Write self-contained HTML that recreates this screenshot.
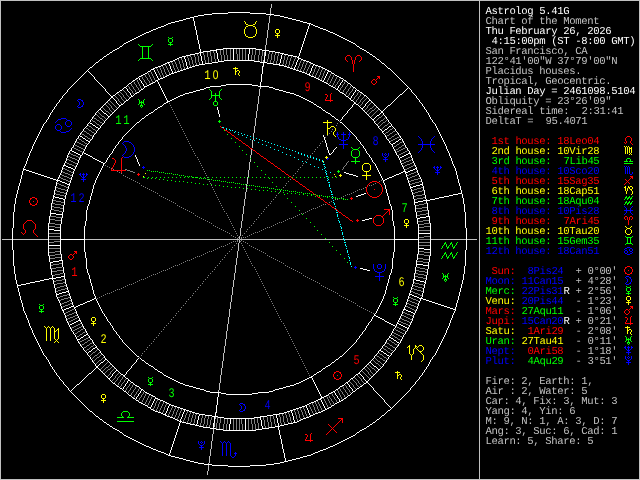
<!DOCTYPE html>
<html lang="en"><head><meta charset="utf-8"><title>Astrolog 5.41G</title>
<style>html,body{margin:0;padding:0;background:#000;overflow:hidden}svg{display:block;will-change:transform}</style></head>
<body>
<svg width="640" height="480" viewBox="0 0 640 480" shape-rendering="crispEdges">
<rect width="640" height="480" fill="#000"/>
<path fill="#ffffff" d="M228 12h22v1h-22zM212 13h16v1h-16zM250 13h16v1h-16zM204 14h8v1h-8zM266 14h8v1h-8zM198 15h6v1h-6zM274 15h6v1h-6zM194 16h4v1h-4zM280 16h4v1h-4zM190 17h4v1h-4zM284 17h4v1h-4zM186 18h4v1h-4zM193 18h1v3h-1zM288 18h4v1h-4zM183 19h3v1h-3zM292 19h4v1h-4zM179 20h4v1h-4zM296 20h4v1h-4zM175 21h4v1h-4zM194 21h1v5h-1zM300 21h3v1h-3zM171 22h4v1h-4zM303 22h4v1h-4zM168 23h3v1h-3zM307 23h4v1h-4zM166 24h2v1h-2zM309 24h1v2h-1zM311 24h2v1h-2zM164 25h2v1h-2zM313 25h2v1h-2zM161 26h3v1h-3zM195 26h1v4h-1zM308 26h1v3h-1zM315 26h3v1h-3zM158 27h3v1h-3zM318 27h2v1h-2zM156 28h2v1h-2zM320 28h3v1h-3zM153 29h3v1h-3zM307 29h1v3h-1zM323 29h3v1h-3zM151 30h2v1h-2zM196 30h1v5h-1zM326 30h2v1h-2zM149 31h2v1h-2zM328 31h2v1h-2zM146 32h3v1h-3zM306 32h1v3h-1zM330 32h3v1h-3zM144 33h2v1h-2zM333 33h2v1h-2zM142 34h2v1h-2zM335 34h2v1h-2zM140 35h2v1h-2zM197 35h1v5h-1zM305 35h1v3h-1zM337 35h2v1h-2zM138 36h2v1h-2zM339 36h2v1h-2zM136 37h2v1h-2zM341 37h2v1h-2zM134 38h2v1h-2zM304 38h1v3h-1zM343 38h2v1h-2zM132 39h2v1h-2zM345 39h2v1h-2zM130 40h2v1h-2zM198 40h1v4h-1zM347 40h2v1h-2zM128 41h2v1h-2zM303 41h1v3h-1zM349 41h2v1h-2zM126 42h2v1h-2zM351 42h2v1h-2zM124 43h2v1h-2zM353 43h2v1h-2zM123 44h1v1h-1zM199 44h1v5h-1zM302 44h1v3h-1zM355 44h1v1h-1zM122 45h1v1h-1zM356 45h1v1h-1zM120 46h2v1h-2zM357 46h2v1h-2zM119 47h1v1h-1zM301 47h1v3h-1zM359 47h1v1h-1zM117 48h2v1h-2zM223 48h33v1h-33zM360 48h2v1h-2zM115 49h2v1h-2zM200 49h1v3h-1zM216 49h7v1h-7zM233 49h1v11h-1zM249 49h1v5h-1zM256 49h6v1h-6zM362 49h2v1h-2zM113 50h2v1h-2zM210 50h7v1h-7zM262 50h7v1h-7zM300 50h1v3h-1zM364 50h2v1h-2zM112 51h1v1h-1zM203 51h7v1h-7zM216 51h1v2h-1zM265 51h1v5h-1zM269 51h6v1h-6zM366 51h1v1h-1zM110 52h2v1h-2zM199 52h4v1h-4zM275 52h5v1h-5zM367 52h2v1h-2zM109 53h1v1h-1zM195 53h4v1h-4zM200 53h1v3h-1zM217 53h1v6h-1zM280 53h4v1h-4zM299 53h1v3h-1zM369 53h1v1h-1zM107 54h2v1h-2zM190 54h5v1h-5zM248 54h1v6h-1zM282 54h1v1h-1zM284 54h4v1h-4zM370 54h2v1h-2zM106 55h1v1h-1zM186 55h4v1h-4zM281 55h1v4h-1zM288 55h5v1h-5zM372 55h1v1h-1zM104 56h2v1h-2zM182 56h4v1h-4zM201 56h1v5h-1zM264 56h1v6h-1zM293 56h4v1h-4zM298 56h1v1h-1zM373 56h2v1h-2zM103 57h1v1h-1zM179 57h3v1h-3zM184 57h1v2h-1zM297 57h2v1h-2zM375 57h1v1h-1zM102 58h1v1h-1zM177 58h2v1h-2zM298 58h3v1h-3zM376 58h1v1h-1zM100 59h2v1h-2zM175 59h2v1h-2zM185 59h1v3h-1zM218 59h1v2h-1zM280 59h1v4h-1zM298 59h1v1h-1zM301 59h2v1h-2zM377 59h2v1h-2zM99 60h1v1h-1zM173 60h2v1h-2zM224 60h30v1h-30zM297 60h1v2h-1zM303 60h3v1h-3zM379 60h1v1h-1zM98 61h1v1h-1zM170 61h3v1h-3zM202 61h1v3h-1zM218 61h6v1h-6zM254 61h6v1h-6zM306 61h3v1h-3zM380 61h1v1h-1zM96 62h2v1h-2zM167 62h3v1h-3zM186 62h1v4h-1zM212 62h6v1h-6zM260 62h7v1h-7zM296 62h1v3h-1zM309 62h2v1h-2zM381 62h1v1h-1zM95 63h1v1h-1zM165 63h2v1h-2zM168 63h1v1h-1zM205 63h7v1h-7zM263 63h1v3h-1zM267 63h6v1h-6zM279 63h1v1h-1zM311 63h2v1h-2zM382 63h2v1h-2zM94 64h1v1h-1zM163 64h2v1h-2zM169 64h1v2h-1zM199 64h6v1h-6zM273 64h7v1h-7zM313 64h2v1h-2zM384 64h1v1h-1zM93 65h1v1h-1zM161 65h2v1h-2zM195 65h4v1h-4zM279 65h5v1h-5zM295 65h1v2h-1zM313 65h1v1h-1zM315 65h3v1h-3zM385 65h1v1h-1zM92 66h1v1h-1zM158 66h3v1h-3zM170 66h1v3h-1zM187 66h1v2h-1zM192 66h3v1h-3zM262 66h1v8h-1zM284 66h3v1h-3zM312 66h1v2h-1zM318 66h3v1h-3zM386 66h1v1h-1zM90 67h2v1h-2zM155 67h3v1h-3zM189 67h3v1h-3zM287 67h3v1h-3zM294 67h1v2h-1zM321 67h2v1h-2zM387 67h1v1h-1zM89 68h1v1h-1zM153 68h2v1h-2zM186 68h3v1h-3zM290 68h3v1h-3zM311 68h1v3h-1zM323 68h2v1h-2zM388 68h2v1h-2zM88 69h1v1h-1zM151 69h3v1h-3zM171 69h1v2h-1zM183 69h3v1h-3zM293 69h3v1h-3zM325 69h2v1h-2zM390 69h1v1h-1zM87 70h1v1h-1zM150 70h1v1h-1zM154 70h1v2h-1zM180 70h3v1h-3zM296 70h3v1h-3zM327 70h2v1h-2zM391 70h1v1h-1zM86 71h1v1h-1zM88 71h1v1h-1zM148 71h2v1h-2zM172 71h1v2h-1zM177 71h3v1h-3zM299 71h3v1h-3zM310 71h1v2h-1zM328 71h3v1h-3zM392 71h1v1h-1zM85 72h1v1h-1zM89 72h1v1h-1zM147 72h1v1h-1zM155 72h1v2h-1zM174 72h3v1h-3zM302 72h3v1h-3zM327 72h1v2h-1zM331 72h1v1h-1zM393 72h1v1h-1zM84 73h1v1h-1zM90 73h1v1h-1zM145 73h2v1h-2zM171 73h3v1h-3zM305 73h2v1h-2zM309 73h1v1h-1zM332 73h2v1h-2zM394 73h1v1h-1zM83 74h1v1h-1zM91 74h1v1h-1zM143 74h2v1h-2zM156 74h1v2h-1zM169 74h2v1h-2zM261 74h1v8h-1zM307 74h3v1h-3zM326 74h1v2h-1zM334 74h1v1h-1zM395 74h1v1h-1zM82 75h1v1h-1zM92 75h1v1h-1zM141 75h2v1h-2zM167 75h2v1h-2zM309 75h2v1h-2zM335 75h2v1h-2zM396 75h1v1h-1zM81 76h1v1h-1zM93 76h1v1h-1zM139 76h2v1h-2zM157 76h1v2h-1zM165 76h2v1h-2zM311 76h3v1h-3zM325 76h1v2h-1zM337 76h2v1h-2zM397 76h1v1h-1zM80 77h1v1h-1zM94 77h1v2h-1zM138 77h1v1h-1zM163 77h2v1h-2zM314 77h2v1h-2zM339 77h2v1h-2zM398 77h1v1h-1zM79 78h1v1h-1zM136 78h2v1h-2zM139 78h1v2h-1zM158 78h1v1h-1zM160 78h3v1h-3zM316 78h2v1h-2zM324 78h1v2h-1zM341 78h2v1h-2zM399 78h1v1h-1zM78 79h1v1h-1zM95 79h1v1h-1zM135 79h1v1h-1zM158 79h2v1h-2zM318 79h2v1h-2zM343 79h1v1h-1zM400 79h1v1h-1zM77 80h1v1h-1zM96 80h1v1h-1zM133 80h2v1h-2zM140 80h1v1h-1zM156 80h2v1h-2zM320 80h2v1h-2zM323 80h1v1h-1zM342 80h1v2h-1zM344 80h2v1h-2zM401 80h1v1h-1zM76 81h1v1h-1zM97 81h1v1h-1zM132 81h1v1h-1zM141 81h1v2h-1zM155 81h1v1h-1zM157 81h1v1h-1zM322 81h2v1h-2zM346 81h1v1h-1zM402 81h1v1h-1zM75 82h1v1h-1zM98 82h1v1h-1zM131 82h1v1h-1zM153 82h2v1h-2zM158 82h1v2h-1zM260 82h1v4h-1zM324 82h2v1h-2zM341 82h1v1h-1zM347 82h1v1h-1zM403 82h1v1h-1zM74 83h1v1h-1zM99 83h1v1h-1zM129 83h2v1h-2zM142 83h1v1h-1zM151 83h2v1h-2zM326 83h2v1h-2zM340 83h1v2h-1zM348 83h2v1h-2zM404 83h1v1h-1zM73 84h1v1h-1zM100 84h1v1h-1zM128 84h1v1h-1zM143 84h1v2h-1zM149 84h2v1h-2zM159 84h1v2h-1zM226 84h26v1h-26zM328 84h1v1h-1zM350 84h1v1h-1zM405 84h1v1h-1zM72 85h1v1h-1zM101 85h1v1h-1zM127 85h1v1h-1zM147 85h2v1h-2zM221 85h5v1h-5zM252 85h6v1h-6zM329 85h2v1h-2zM339 85h1v1h-1zM351 85h1v1h-1zM406 85h1v1h-1zM71 86h1v1h-1zM102 86h1v1h-1zM126 86h1v1h-1zM144 86h3v1h-3zM160 86h1v2h-1zM210 86h11v1h-11zM258 86h11v1h-11zM331 86h2v1h-2zM338 86h1v2h-1zM352 86h1v1h-1zM407 86h1v1h-1zM70 87h1v1h-1zM103 87h1v1h-1zM124 87h2v1h-2zM144 87h1v1h-1zM206 87h4v1h-4zM269 87h4v1h-4zM333 87h2v1h-2zM353 87h2v1h-2zM408 87h1v1h-1zM69 88h1v1h-1zM104 88h1v1h-1zM123 88h1v1h-1zM126 88h1v1h-1zM143 88h1v1h-1zM161 88h1v2h-1zM204 88h2v1h-2zM273 88h2v1h-2zM335 88h1v1h-1zM337 88h1v1h-1zM355 88h1v1h-1zM407 88h1v1h-1zM409 88h1v1h-1zM68 89h1v1h-1zM105 89h1v2h-1zM122 89h1v1h-1zM127 89h1v2h-1zM141 89h2v1h-2zM200 89h4v1h-4zM275 89h4v1h-4zM336 89h2v1h-2zM356 89h1v1h-1zM406 89h1v1h-1zM410 89h1v1h-1zM67 90h1v2h-1zM120 90h2v1h-2zM140 90h1v1h-1zM162 90h1v2h-1zM196 90h4v1h-4zM279 90h4v1h-4zM338 90h1v1h-1zM355 90h1v2h-1zM357 90h2v1h-2zM405 90h1v1h-1zM411 90h1v2h-1zM106 91h1v1h-1zM119 91h1v1h-1zM128 91h1v1h-1zM139 91h1v1h-1zM193 91h3v1h-3zM283 91h3v1h-3zM339 91h1v1h-1zM359 91h1v1h-1zM404 91h1v1h-1zM66 92h1v1h-1zM107 92h1v1h-1zM117 92h2v1h-2zM129 92h1v1h-1zM137 92h2v1h-2zM163 92h1v2h-1zM189 92h4v1h-4zM286 92h4v1h-4zM340 92h2v1h-2zM354 92h1v1h-1zM360 92h2v1h-2zM403 92h1v1h-1zM412 92h1v1h-1zM65 93h1v1h-1zM108 93h1v1h-1zM116 93h1v1h-1zM130 93h1v2h-1zM135 93h2v1h-2zM185 93h4v1h-4zM290 93h4v1h-4zM342 93h2v1h-2zM353 93h1v2h-1zM362 93h1v1h-1zM402 93h1v1h-1zM413 93h1v1h-1zM64 94h1v1h-1zM109 94h1v1h-1zM115 94h1v1h-1zM134 94h1v1h-1zM164 94h1v2h-1zM183 94h2v1h-2zM294 94h2v1h-2zM344 94h1v1h-1zM363 94h1v1h-1zM400 94h2v1h-2zM414 94h1v1h-1zM63 95h1v1h-1zM110 95h1v1h-1zM113 95h2v1h-2zM131 95h1v1h-1zM133 95h1v1h-1zM180 95h3v1h-3zM296 95h3v1h-3zM345 95h1v1h-1zM352 95h1v1h-1zM364 95h2v1h-2zM399 95h1v1h-1zM415 95h1v1h-1zM62 96h1v2h-1zM111 96h2v2h-2zM131 96h2v1h-2zM165 96h1v2h-1zM178 96h2v1h-2zM299 96h2v1h-2zM346 96h2v1h-2zM351 96h1v2h-1zM366 96h1v1h-1zM398 96h1v1h-1zM416 96h1v2h-1zM130 97h1v1h-1zM176 97h2v1h-2zM301 97h2v1h-2zM348 97h1v1h-1zM367 97h1v1h-1zM397 97h1v1h-1zM61 98h1v1h-1zM110 98h1v1h-1zM113 98h1v1h-1zM129 98h1v1h-1zM166 98h1v2h-1zM174 98h2v1h-2zM303 98h2v1h-2zM349 98h2v1h-2zM368 98h1v1h-1zM396 98h1v1h-1zM417 98h1v1h-1zM60 99h1v1h-1zM109 99h1v1h-1zM114 99h1v1h-1zM128 99h1v1h-1zM172 99h2v1h-2zM305 99h2v1h-2zM350 99h1v1h-1zM369 99h1v1h-1zM395 99h1v1h-1zM418 99h1v1h-1zM59 100h1v2h-1zM108 100h1v1h-1zM115 100h1v1h-1zM126 100h2v1h-2zM167 100h1v1h-1zM170 100h2v1h-2zM307 100h2v1h-2zM351 100h2v1h-2zM369 100h2v1h-2zM394 100h1v1h-1zM419 100h1v2h-1zM107 101h1v1h-1zM116 101h1v2h-1zM125 101h1v1h-1zM167 101h3v1h-3zM309 101h2v1h-2zM353 101h1v1h-1zM368 101h1v1h-1zM371 101h1v1h-1zM393 101h1v1h-1zM58 102h1v1h-1zM106 102h1v1h-1zM124 102h1v1h-1zM166 102h2v1h-2zM311 102h2v1h-2zM354 102h1v1h-1zM367 102h1v1h-1zM372 102h1v1h-1zM392 102h1v1h-1zM420 102h1v1h-1zM57 103h1v1h-1zM105 103h1v1h-1zM117 103h1v1h-1zM123 103h1v1h-1zM164 103h2v1h-2zM313 103h1v1h-1zM354 103h2v1h-2zM366 103h1v1h-1zM373 103h1v1h-1zM391 103h1v1h-1zM421 103h1v1h-1zM56 104h1v2h-1zM104 104h1v1h-1zM118 104h1v1h-1zM121 104h2v1h-2zM163 104h1v1h-1zM314 104h2v1h-2zM353 104h1v1h-1zM356 104h2v1h-2zM365 104h1v2h-1zM374 104h1v1h-1zM390 104h1v1h-1zM422 104h1v2h-1zM103 105h1v1h-1zM119 105h2v1h-2zM162 105h1v1h-1zM316 105h1v1h-1zM352 105h1v2h-1zM358 105h1v1h-1zM375 105h1v1h-1zM388 105h2v1h-2zM55 106h1v1h-1zM102 106h1v1h-1zM119 106h1v1h-1zM160 106h2v1h-2zM317 106h2v1h-2zM359 106h1v1h-1zM364 106h1v1h-1zM376 106h1v1h-1zM387 106h1v1h-1zM423 106h1v1h-1zM54 107h1v2h-1zM101 107h1v1h-1zM118 107h1v1h-1zM158 107h2v1h-2zM217 107h1v3h-1zM319 107h2v1h-2zM351 107h1v1h-1zM360 107h1v1h-1zM363 107h1v1h-1zM377 107h1v1h-1zM386 107h1v1h-1zM424 107h1v2h-1zM100 108h1v1h-1zM117 108h1v1h-1zM157 108h1v1h-1zM321 108h1v1h-1zM350 108h1v1h-1zM361 108h2v1h-2zM378 108h1v1h-1zM385 108h1v1h-1zM53 109h1v1h-1zM99 109h2v1h-2zM116 109h1v1h-1zM155 109h2v1h-2zM322 109h1v1h-1zM349 109h1v1h-1zM362 109h1v1h-1zM379 109h1v1h-1zM384 109h1v1h-1zM425 109h1v1h-1zM52 110h1v2h-1zM98 110h1v1h-1zM101 110h1v1h-1zM115 110h1v1h-1zM154 110h1v1h-1zM218 110h1v4h-1zM323 110h2v1h-2zM348 110h1v1h-1zM363 110h1v1h-1zM380 110h1v1h-1zM383 110h1v1h-1zM426 110h1v2h-1zM97 111h1v1h-1zM102 111h1v1h-1zM114 111h1v1h-1zM153 111h1v1h-1zM325 111h1v1h-1zM347 111h1v2h-1zM364 111h1v1h-1zM381 111h2v2h-2zM51 112h1v1h-1zM96 112h1v1h-1zM103 112h1v1h-1zM113 112h1v1h-1zM151 112h2v1h-2zM326 112h2v1h-2zM365 112h1v1h-1zM427 112h1v1h-1zM50 113h1v2h-1zM95 113h1v2h-1zM104 113h2v1h-2zM112 113h1v1h-1zM149 113h2v1h-2zM328 113h2v1h-2zM346 113h1v1h-1zM366 113h1v1h-1zM380 113h1v1h-1zM383 113h1v2h-1zM428 113h1v2h-1zM106 114h1v1h-1zM111 114h1v1h-1zM148 114h1v1h-1zM219 114h1v3h-1zM330 114h1v1h-1zM345 114h1v1h-1zM367 114h1v1h-1zM379 114h1v1h-1zM49 115h1v2h-1zM94 115h1v1h-1zM107 115h1v1h-1zM110 115h1v1h-1zM146 115h2v1h-2zM331 115h1v1h-1zM344 115h1v1h-1zM368 115h1v1h-1zM377 115h2v1h-2zM384 115h1v1h-1zM429 115h1v2h-1zM93 116h1v1h-1zM108 116h2v1h-2zM145 116h1v1h-1zM332 116h2v1h-2zM343 116h1v1h-1zM369 116h1v1h-1zM376 116h1v1h-1zM385 116h1v1h-1zM48 117h1v2h-1zM92 117h1v2h-1zM108 117h1v1h-1zM144 117h1v1h-1zM334 117h1v1h-1zM342 117h1v2h-1zM370 117h1v1h-1zM375 117h1v1h-1zM386 117h1v2h-1zM430 117h1v2h-1zM107 118h1v1h-1zM142 118h2v1h-2zM335 118h1v1h-1zM371 118h1v1h-1zM374 118h1v1h-1zM47 119h1v1h-1zM91 119h1v1h-1zM106 119h1v1h-1zM141 119h1v1h-1zM336 119h2v1h-2zM341 119h1v1h-1zM372 119h2v1h-2zM387 119h1v1h-1zM431 119h1v1h-1zM46 120h1v2h-1zM90 120h1v2h-1zM105 120h1v1h-1zM140 120h1v1h-1zM338 120h1v1h-1zM340 120h1v1h-1zM373 120h1v1h-1zM388 120h1v2h-1zM432 120h1v2h-1zM104 121h1v2h-1zM139 121h1v1h-1zM374 121h1v2h-1zM45 122h1v1h-1zM89 122h1v1h-1zM137 122h2v1h-2zM340 122h2v1h-2zM389 122h1v1h-1zM433 122h1v1h-1zM44 123h1v1h-1zM88 123h1v1h-1zM90 123h2v1h-2zM103 123h1v1h-1zM136 123h1v1h-1zM342 123h1v1h-1zM375 123h1v1h-1zM390 123h1v1h-1zM434 123h1v1h-1zM43 124h1v2h-1zM87 124h1v2h-1zM92 124h1v1h-1zM102 124h1v1h-1zM135 124h1v1h-1zM343 124h1v1h-1zM376 124h1v1h-1zM391 124h1v2h-1zM435 124h1v2h-1zM93 125h2v1h-2zM101 125h1v1h-1zM134 125h1v1h-1zM344 125h1v1h-1zM377 125h1v1h-1zM42 126h1v2h-1zM86 126h1v1h-1zM95 126h1v1h-1zM100 126h1v2h-1zM133 126h1v1h-1zM345 126h1v1h-1zM378 126h1v2h-1zM389 126h2v1h-2zM392 126h1v1h-1zM436 126h1v2h-1zM85 127h1v1h-1zM96 127h2v1h-2zM132 127h1v1h-1zM346 127h1v1h-1zM388 127h1v1h-1zM393 127h1v1h-1zM41 128h1v2h-1zM84 128h1v1h-1zM98 128h2v1h-2zM131 128h1v1h-1zM347 128h1v1h-1zM379 128h1v1h-1zM387 128h1v1h-1zM394 128h1v1h-1zM437 128h1v2h-1zM83 129h1v2h-1zM98 129h1v1h-1zM130 129h1v1h-1zM348 129h1v1h-1zM380 129h1v1h-1zM385 129h2v1h-2zM395 129h1v2h-1zM40 130h1v2h-1zM97 130h1v1h-1zM129 130h1v1h-1zM349 130h1v1h-1zM381 130h1v1h-1zM384 130h1v1h-1zM438 130h1v2h-1zM82 131h1v1h-1zM96 131h1v2h-1zM128 131h1v1h-1zM350 131h1v1h-1zM382 131h2v1h-2zM396 131h1v1h-1zM39 132h1v2h-1zM81 132h1v1h-1zM127 132h1v1h-1zM351 132h1v1h-1zM382 132h1v1h-1zM397 132h1v1h-1zM439 132h1v2h-1zM80 133h1v2h-1zM95 133h1v1h-1zM126 133h1v1h-1zM352 133h1v1h-1zM383 133h1v1h-1zM398 133h1v2h-1zM38 134h1v2h-1zM94 134h1v1h-1zM125 134h1v1h-1zM353 134h1v1h-1zM384 134h1v1h-1zM440 134h1v2h-1zM79 135h1v1h-1zM93 135h1v2h-1zM124 135h1v1h-1zM323 135h1v2h-1zM354 135h1v1h-1zM385 135h1v2h-1zM399 135h1v1h-1zM37 136h1v2h-1zM78 136h1v2h-1zM80 136h2v1h-2zM123 136h1v1h-1zM355 136h1v1h-1zM400 136h1v2h-1zM441 136h1v2h-1zM82 137h1v1h-1zM92 137h1v2h-1zM122 137h1v2h-1zM324 137h1v3h-1zM356 137h1v2h-1zM386 137h1v2h-1zM36 138h1v2h-1zM77 138h1v1h-1zM83 138h2v1h-2zM401 138h1v1h-1zM442 138h1v2h-1zM76 139h1v2h-1zM85 139h1v1h-1zM91 139h1v1h-1zM121 139h1v1h-1zM357 139h1v1h-1zM387 139h1v1h-1zM399 139h2v1h-2zM402 139h1v2h-1zM35 140h1v2h-1zM86 140h2v1h-2zM90 140h1v1h-1zM120 140h1v1h-1zM325 140h1v3h-1zM358 140h1v1h-1zM388 140h1v1h-1zM398 140h1v1h-1zM443 140h1v2h-1zM75 141h1v2h-1zM88 141h2v1h-2zM119 141h1v1h-1zM359 141h1v1h-1zM389 141h1v2h-1zM396 141h2v1h-2zM403 141h1v2h-1zM34 142h1v2h-1zM89 142h1v1h-1zM118 142h1v2h-1zM360 142h1v2h-1zM395 142h1v1h-1zM444 142h1v2h-1zM74 143h1v2h-1zM88 143h1v1h-1zM326 143h1v4h-1zM390 143h1v1h-1zM393 143h2v1h-2zM404 143h1v2h-1zM33 144h1v2h-1zM87 144h1v1h-1zM117 144h1v1h-1zM361 144h1v1h-1zM391 144h2v1h-2zM445 144h1v2h-1zM73 145h1v2h-1zM86 145h1v2h-1zM116 145h1v1h-1zM362 145h1v1h-1zM392 145h1v2h-1zM405 145h1v2h-1zM32 146h1v3h-1zM115 146h1v2h-1zM363 146h1v2h-1zM446 146h1v3h-1zM72 147h1v1h-1zM85 147h1v2h-1zM327 147h1v3h-1zM336 147h1v1h-1zM393 147h1v2h-1zM406 147h1v1h-1zM71 148h1v2h-1zM114 148h1v1h-1zM335 148h1v1h-1zM364 148h1v1h-1zM407 148h1v2h-1zM31 149h1v2h-1zM84 149h1v2h-1zM113 149h1v2h-1zM334 149h1v1h-1zM365 149h1v2h-1zM394 149h1v2h-1zM447 149h1v2h-1zM70 150h2v1h-2zM328 150h1v3h-1zM333 150h1v2h-1zM408 150h1v1h-1zM30 151h1v2h-1zM69 151h1v2h-1zM72 151h2v1h-2zM83 151h1v2h-1zM112 151h1v2h-1zM366 151h1v2h-1zM395 151h1v2h-1zM409 151h1v2h-1zM448 151h1v2h-1zM74 152h2v1h-2zM332 152h1v1h-1zM29 153h1v3h-1zM68 153h1v2h-1zM76 153h2v1h-2zM82 153h1v2h-1zM84 153h2v1h-2zM111 153h1v1h-1zM329 153h1v1h-1zM331 153h1v1h-1zM367 153h1v1h-1zM396 153h1v2h-1zM408 153h3v1h-3zM449 153h1v3h-1zM78 154h2v1h-2zM86 154h2v1h-2zM110 154h1v1h-1zM329 154h2v1h-2zM368 154h1v1h-1zM406 154h2v1h-2zM410 154h1v1h-1zM67 155h1v3h-1zM80 155h2v1h-2zM88 155h2v1h-2zM109 155h1v2h-1zM135 155h1v2h-1zM369 155h1v2h-1zM397 155h1v1h-1zM404 155h2v1h-2zM411 155h1v3h-1zM28 156h1v2h-1zM80 156h1v2h-1zM90 156h2v1h-2zM398 156h1v2h-1zM402 156h2v1h-2zM450 156h1v2h-1zM92 157h1v1h-1zM108 157h1v1h-1zM136 157h1v2h-1zM370 157h1v1h-1zM400 157h2v1h-2zM27 158h1v3h-1zM66 158h1v3h-1zM79 158h1v2h-1zM93 158h2v1h-2zM107 158h1v2h-1zM371 158h1v2h-1zM399 158h1v2h-1zM412 158h1v3h-1zM451 158h1v3h-1zM95 159h2v1h-2zM137 159h1v3h-1zM78 160h1v3h-1zM97 160h2v1h-2zM106 160h1v2h-1zM372 160h1v2h-1zM400 160h1v3h-1zM26 161h1v3h-1zM65 161h1v2h-1zM99 161h2v1h-2zM413 161h1v2h-1zM452 161h1v3h-1zM101 162h2v1h-2zM105 162h1v1h-1zM138 162h1v2h-1zM373 162h1v1h-1zM64 163h1v2h-1zM77 163h1v2h-1zM103 163h2v1h-2zM374 163h1v1h-1zM401 163h1v2h-1zM414 163h1v2h-1zM25 164h1v2h-1zM103 164h1v2h-1zM139 164h1v2h-1zM375 164h1v2h-1zM453 164h1v2h-1zM63 165h3v1h-3zM76 165h1v2h-1zM402 165h1v2h-1zM415 165h1v2h-1zM24 166h1v2h-1zM63 166h1v1h-1zM66 166h2v1h-2zM102 166h1v2h-1zM376 166h1v2h-1zM454 166h1v2h-1zM62 167h1v3h-1zM68 167h3v1h-3zM75 167h1v2h-1zM403 167h1v2h-1zM416 167h1v1h-1zM23 168h1v1h-1zM71 168h2v1h-2zM101 168h1v2h-1zM377 168h1v2h-1zM415 168h2v1h-2zM455 168h1v3h-1zM23 169h3v1h-3zM73 169h2v1h-2zM404 169h1v2h-1zM413 169h2v1h-2zM416 169h1v1h-1zM23 170h1v1h-1zM26 170h3v1h-3zM61 170h1v3h-1zM74 170h1v1h-1zM100 170h1v2h-1zM378 170h1v2h-1zM410 170h3v1h-3zM417 170h1v3h-1zM22 171h1v4h-1zM29 171h3v1h-3zM73 171h1v3h-1zM403 171h3v1h-3zM408 171h2v1h-2zM456 171h1v4h-1zM32 172h3v1h-3zM99 172h1v2h-1zM344 172h2v1h-2zM379 172h1v2h-1zM401 172h2v1h-2zM405 172h3v1h-3zM35 173h3v1h-3zM60 173h1v2h-1zM346 173h3v1h-3zM399 173h2v1h-2zM405 173h1v1h-1zM418 173h1v2h-1zM38 174h3v1h-3zM72 174h1v3h-1zM98 174h1v2h-1zM349 174h4v1h-4zM380 174h1v2h-1zM396 174h3v1h-3zM406 174h1v3h-1zM21 175h1v4h-1zM41 175h3v1h-3zM59 175h1v2h-1zM353 175h3v1h-3zM394 175h2v1h-2zM419 175h1v2h-1zM457 175h1v4h-1zM44 176h3v1h-3zM97 176h1v2h-1zM356 176h2v1h-2zM381 176h1v2h-1zM392 176h2v1h-2zM47 177h3v1h-3zM58 177h1v2h-1zM71 177h1v3h-1zM389 177h3v1h-3zM407 177h1v3h-1zM420 177h1v2h-1zM50 178h3v1h-3zM96 178h1v2h-1zM382 178h1v2h-1zM387 178h2v1h-2zM20 179h1v4h-1zM53 179h3v1h-3zM57 179h1v1h-1zM385 179h2v1h-2zM421 179h1v3h-1zM458 179h1v4h-1zM56 180h4v1h-4zM70 180h1v3h-1zM95 180h1v3h-1zM383 180h2v1h-2zM408 180h1v3h-1zM57 181h1v1h-1zM60 181h2v1h-2zM383 181h1v2h-1zM56 182h1v4h-1zM62 182h3v1h-3zM422 182h1v2h-1zM19 183h1v3h-1zM65 183h2v1h-2zM69 183h1v1h-1zM94 183h1v2h-1zM384 183h1v2h-1zM409 183h1v3h-1zM459 183h1v3h-1zM67 184h3v1h-3zM420 184h3v1h-3zM69 185h1v1h-1zM93 185h1v4h-1zM385 185h1v4h-1zM416 185h4v1h-4zM422 185h1v1h-1zM18 186h1v4h-1zM55 186h1v4h-1zM68 186h1v3h-1zM410 186h1v1h-1zM413 186h3v1h-3zM423 186h1v4h-1zM460 186h1v4h-1zM410 187h3v1h-3zM410 188h1v1h-1zM67 189h1v3h-1zM92 189h1v4h-1zM386 189h1v4h-1zM411 189h1v3h-1zM17 190h1v4h-1zM54 190h1v5h-1zM424 190h1v5h-1zM461 190h1v3h-1zM66 192h1v3h-1zM412 192h1v3h-1zM91 193h1v3h-1zM364 193h2v1h-2zM387 193h1v3h-1zM458 193h4v1h-4zM16 194h1v4h-1zM361 194h3v1h-3zM453 194h5v1h-5zM462 194h1v4h-1zM53 195h1v1h-1zM65 195h1v4h-1zM358 195h3v1h-3zM413 195h1v4h-1zM425 195h1v4h-1zM449 195h4v1h-4zM53 196h2v1h-2zM90 196h1v4h-1zM356 196h2v1h-2zM388 196h1v4h-1zM444 196h5v1h-5zM53 197h1v2h-1zM55 197h4v1h-4zM439 197h5v1h-5zM15 198h1v6h-1zM59 198h4v1h-4zM435 198h4v1h-4zM463 198h1v6h-1zM52 199h1v4h-1zM63 199h2v1h-2zM414 199h1v3h-1zM426 199h1v1h-1zM430 199h5v1h-5zM64 200h1v5h-1zM89 200h1v4h-1zM389 200h1v4h-1zM423 200h7v1h-7zM418 201h5v1h-5zM426 201h1v2h-1zM414 202h4v1h-4zM51 203h1v7h-1zM414 203h1v2h-1zM427 203h1v7h-1zM14 204h1v8h-1zM88 204h1v2h-1zM390 204h1v2h-1zM464 204h1v8h-1zM63 205h1v7h-1zM415 205h1v7h-1zM87 206h1v4h-1zM391 206h1v4h-1zM50 210h1v3h-1zM86 210h1v11h-1zM392 210h1v11h-1zM428 210h1v6h-1zM13 212h1v16h-1zM62 212h1v2h-1zM416 212h1v6h-1zM465 212h1v16h-1zM50 213h6v1h-6zM50 214h1v2h-1zM56 214h7v1h-7zM62 215h1v3h-1zM49 216h1v7h-1zM426 216h4v1h-4zM420 217h6v1h-6zM429 217h1v6h-1zM61 218h1v6h-1zM369 218h3v1h-3zM417 218h3v1h-3zM365 219h4v1h-4zM417 219h1v5h-1zM362 220h3v1h-3zM85 221h1v5h-1zM393 221h1v5h-1zM48 223h1v6h-1zM430 223h1v10h-1zM60 224h1v6h-1zM418 224h1v9h-1zM84 226h1v13h-1zM394 226h1v13h-1zM12 228h1v22h-1zM466 228h1v22h-1zM48 229h6v1h-6zM48 230h1v15h-1zM54 230h7v1h-7zM60 231h1v8h-1zM418 233h13v1h-13zM418 234h1v5h-1zM430 234h1v15h-1zM60 239h25v1h-25zM394 239h25v1h-25zM60 240h1v5h-1zM84 240h1v12h-1zM394 240h1v12h-1zM418 240h1v8h-1zM48 245h13v1h-13zM48 246h1v10h-1zM60 246h1v8h-1zM418 248h6v1h-6zM418 249h1v5h-1zM424 249h7v1h-7zM13 250h1v16h-1zM430 250h1v6h-1zM465 250h1v16h-1zM85 252h1v6h-1zM393 252h1v6h-1zM61 254h1v6h-1zM417 254h1v6h-1zM49 256h1v6h-1zM429 256h1v6h-1zM86 258h1v11h-1zM392 258h1v11h-1zM59 260h4v1h-4zM416 260h1v4h-1zM53 261h6v1h-6zM62 261h1v6h-1zM50 262h3v1h-3zM428 262h1v3h-1zM50 263h1v6h-1zM416 264h7v1h-7zM416 265h1v2h-1zM423 265h6v1h-6zM14 266h1v8h-1zM428 266h1v3h-1zM464 266h1v8h-1zM63 267h1v6h-1zM415 267h1v6h-1zM360 268h3v1h-3zM51 269h1v6h-1zM87 269h1v4h-1zM363 269h4v1h-4zM391 269h1v4h-1zM427 269h1v6h-1zM367 270h3v1h-3zM64 273h1v3h-1zM88 273h1v2h-1zM390 273h1v2h-1zM414 273h1v6h-1zM15 274h1v6h-1zM463 274h1v6h-1zM52 275h1v3h-1zM89 275h1v4h-1zM389 275h1v4h-1zM426 275h1v5h-1zM61 276h4v1h-4zM56 277h5v1h-5zM64 277h1v2h-1zM49 278h7v1h-7zM44 279h5v1h-5zM52 279h1v1h-1zM65 279h1v5h-1zM90 279h1v4h-1zM388 279h1v4h-1zM413 279h3v1h-3zM16 280h1v4h-1zM40 280h4v1h-4zM53 280h1v4h-1zM413 280h1v4h-1zM416 280h4v1h-4zM425 280h1v2h-1zM462 280h1v4h-1zM35 281h5v1h-5zM420 281h4v1h-4zM30 282h5v1h-5zM424 282h2v1h-2zM26 283h4v1h-4zM91 283h1v3h-1zM387 283h1v3h-1zM425 283h1v1h-1zM17 284h1v1h-1zM21 284h5v1h-5zM54 284h1v4h-1zM66 284h1v3h-1zM412 284h1v3h-1zM424 284h1v4h-1zM461 284h1v4h-1zM17 285h4v1h-4zM17 286h1v2h-1zM92 286h1v4h-1zM386 286h1v4h-1zM67 287h1v3h-1zM411 287h1v3h-1zM18 288h1v4h-1zM55 288h1v5h-1zM423 288h1v5h-1zM460 288h1v4h-1zM68 290h1v1h-1zM93 290h1v4h-1zM385 290h1v4h-1zM410 290h1v3h-1zM66 291h3v1h-3zM19 292h1v4h-1zM62 292h4v1h-4zM68 292h1v1h-1zM459 292h1v4h-1zM56 293h1v1h-1zM59 293h3v1h-3zM69 293h1v3h-1zM409 293h1v1h-1zM422 293h1v4h-1zM56 294h3v1h-3zM94 294h1v2h-1zM384 294h1v2h-1zM409 294h3v1h-3zM56 295h1v2h-1zM409 295h1v1h-1zM412 295h2v1h-2zM20 296h1v4h-1zM70 296h1v3h-1zM95 296h1v2h-1zM383 296h1v3h-1zM408 296h1v3h-1zM414 296h3v1h-3zM458 296h1v4h-1zM57 297h1v2h-1zM417 297h2v1h-2zM421 297h1v1h-1zM94 298h2v1h-2zM419 298h4v1h-4zM58 299h1v2h-1zM71 299h1v3h-1zM92 299h2v1h-2zM96 299h1v2h-1zM382 299h1v2h-1zM407 299h1v3h-1zM420 299h1v2h-1zM423 299h3v1h-3zM21 300h1v3h-1zM90 300h2v1h-2zM426 300h3v1h-3zM457 300h1v3h-1zM59 301h1v2h-1zM87 301h3v1h-3zM97 301h1v2h-1zM381 301h1v2h-1zM419 301h1v2h-1zM429 301h3v1h-3zM72 302h1v3h-1zM85 302h2v1h-2zM406 302h1v3h-1zM432 302h3v1h-3zM22 303h1v4h-1zM60 303h1v3h-1zM83 303h2v1h-2zM98 303h1v2h-1zM380 303h1v2h-1zM418 303h1v3h-1zM435 303h3v1h-3zM456 303h1v4h-1zM80 304h3v1h-3zM438 304h3v1h-3zM73 305h1v1h-1zM78 305h2v1h-2zM99 305h1v2h-1zM379 305h1v2h-1zM405 305h1v2h-1zM441 305h3v1h-3zM61 306h1v3h-1zM71 306h3v1h-3zM76 306h2v1h-2zM417 306h1v3h-1zM444 306h3v1h-3zM23 307h1v4h-1zM69 307h2v1h-2zM74 307h2v1h-2zM100 307h1v2h-1zM378 307h1v2h-1zM404 307h1v2h-1zM447 307h3v1h-3zM455 307h1v2h-1zM66 308h3v1h-3zM74 308h1v1h-1zM450 308h3v1h-3zM62 309h1v1h-1zM64 309h2v1h-2zM75 309h1v2h-1zM101 309h1v2h-1zM377 309h1v2h-1zM403 309h3v1h-3zM416 309h1v2h-1zM453 309h3v1h-3zM62 310h2v1h-2zM403 310h1v1h-1zM406 310h2v1h-2zM455 310h1v1h-1zM24 311h1v2h-1zM63 311h1v2h-1zM76 311h1v3h-1zM102 311h1v2h-1zM376 311h1v2h-1zM402 311h1v3h-1zM408 311h3v1h-3zM415 311h1v2h-1zM454 311h1v2h-1zM411 312h2v1h-2zM25 313h1v2h-1zM64 313h1v2h-1zM103 313h1v1h-1zM375 313h1v1h-1zM413 313h2v1h-2zM453 313h1v2h-1zM77 314h1v2h-1zM104 314h1v2h-1zM374 314h1v1h-1zM401 314h1v2h-1zM414 314h1v1h-1zM26 315h1v3h-1zM65 315h1v3h-1zM374 315h2v1h-2zM413 315h1v3h-1zM452 315h1v3h-1zM78 316h1v2h-1zM105 316h1v1h-1zM373 316h1v1h-1zM376 316h2v1h-2zM400 316h1v2h-1zM106 317h1v2h-1zM372 317h1v2h-1zM378 317h2v1h-2zM27 318h1v2h-1zM66 318h1v3h-1zM79 318h1v2h-1zM380 318h2v1h-2zM399 318h1v2h-1zM412 318h1v3h-1zM451 318h1v2h-1zM107 319h1v2h-1zM371 319h1v2h-1zM382 319h2v1h-2zM28 320h1v3h-1zM78 320h3v1h-3zM384 320h1v1h-1zM398 320h1v2h-1zM450 320h1v3h-1zM67 321h1v2h-1zM76 321h2v1h-2zM80 321h1v1h-1zM108 321h1v1h-1zM370 321h1v1h-1zM385 321h2v1h-2zM411 321h1v2h-1zM74 322h2v1h-2zM81 322h1v2h-1zM109 322h1v1h-1zM369 322h1v1h-1zM387 322h2v1h-2zM397 322h1v1h-1zM29 323h1v3h-1zM68 323h1v2h-1zM72 323h2v1h-2zM110 323h1v2h-1zM368 323h1v2h-1zM389 323h2v1h-2zM397 323h2v1h-2zM410 323h1v2h-1zM449 323h1v3h-1zM70 324h2v1h-2zM82 324h1v2h-1zM391 324h2v1h-2zM396 324h1v2h-1zM399 324h2v1h-2zM69 325h1v2h-1zM111 325h1v1h-1zM367 325h1v1h-1zM393 325h2v1h-2zM401 325h2v1h-2zM409 325h1v2h-1zM30 326h1v2h-1zM83 326h1v2h-1zM112 326h1v2h-1zM366 326h1v2h-1zM395 326h1v2h-1zM403 326h2v1h-2zM448 326h1v2h-1zM70 327h1v2h-1zM405 327h2v1h-2zM408 327h1v1h-1zM31 328h1v2h-1zM84 328h1v1h-1zM113 328h1v2h-1zM365 328h1v2h-1zM394 328h1v1h-1zM407 328h2v1h-2zM447 328h1v2h-1zM71 329h1v2h-1zM85 329h1v2h-1zM393 329h1v2h-1zM407 329h1v2h-1zM32 330h1v3h-1zM114 330h1v1h-1zM364 330h1v1h-1zM446 330h1v3h-1zM72 331h1v1h-1zM86 331h1v2h-1zM115 331h1v1h-1zM363 331h1v1h-1zM392 331h1v2h-1zM406 331h1v1h-1zM73 332h1v2h-1zM116 332h1v2h-1zM362 332h1v2h-1zM405 332h1v2h-1zM33 333h1v2h-1zM87 333h1v1h-1zM391 333h1v2h-1zM445 333h1v2h-1zM74 334h1v1h-1zM86 334h2v1h-2zM117 334h1v1h-1zM361 334h1v1h-1zM404 334h1v1h-1zM34 335h1v2h-1zM75 335h1v2h-1zM84 335h2v1h-2zM88 335h1v1h-1zM118 335h1v1h-1zM360 335h1v1h-1zM390 335h1v1h-1zM403 335h1v2h-1zM444 335h1v2h-1zM83 336h1v1h-1zM89 336h1v2h-1zM119 336h1v2h-1zM359 336h1v2h-1zM389 336h1v1h-1zM35 337h1v2h-1zM76 337h1v2h-1zM81 337h2v1h-2zM389 337h2v1h-2zM402 337h1v2h-1zM443 337h1v2h-1zM80 338h1v1h-1zM90 338h1v1h-1zM120 338h1v1h-1zM358 338h1v1h-1zM388 338h1v1h-1zM391 338h2v1h-2zM36 339h1v2h-1zM77 339h3v1h-3zM91 339h1v1h-1zM121 339h1v1h-1zM357 339h1v1h-1zM387 339h1v1h-1zM393 339h1v1h-1zM401 339h1v2h-1zM442 339h1v2h-1zM77 340h1v1h-1zM92 340h1v2h-1zM122 340h1v2h-1zM356 340h1v2h-1zM386 340h1v2h-1zM394 340h2v1h-2zM37 341h1v2h-1zM78 341h1v2h-1zM396 341h1v1h-1zM400 341h1v2h-1zM441 341h1v2h-1zM93 342h1v2h-1zM123 342h1v1h-1zM355 342h1v1h-1zM385 342h1v2h-1zM397 342h2v1h-2zM38 343h1v2h-1zM79 343h1v1h-1zM124 343h1v1h-1zM354 343h1v1h-1zM399 343h1v1h-1zM440 343h1v2h-1zM80 344h1v2h-1zM94 344h1v1h-1zM125 344h1v1h-1zM353 344h1v1h-1zM384 344h1v1h-1zM398 344h1v2h-1zM39 345h1v2h-1zM95 345h1v1h-1zM126 345h1v1h-1zM352 345h1v1h-1zM383 345h1v1h-1zM439 345h1v2h-1zM81 346h1v1h-1zM96 346h1v1h-1zM127 346h1v1h-1zM351 346h1v1h-1zM382 346h1v2h-1zM397 346h1v1h-1zM40 347h1v2h-1zM82 347h1v1h-1zM95 347h2v1h-2zM128 347h1v1h-1zM350 347h1v1h-1zM396 347h1v1h-1zM438 347h1v2h-1zM83 348h1v2h-1zM93 348h2v1h-2zM97 348h1v1h-1zM129 348h1v1h-1zM349 348h1v1h-1zM381 348h1v1h-1zM395 348h1v2h-1zM41 349h1v2h-1zM92 349h1v1h-1zM98 349h1v1h-1zM130 349h1v1h-1zM348 349h1v1h-1zM380 349h1v1h-1zM437 349h1v2h-1zM84 350h1v1h-1zM91 350h1v1h-1zM99 350h1v1h-1zM131 350h1v1h-1zM347 350h1v1h-1zM379 350h2v1h-2zM394 350h1v1h-1zM42 351h1v2h-1zM85 351h1v1h-1zM89 351h2v1h-2zM100 351h1v2h-1zM132 351h1v1h-1zM346 351h1v1h-1zM378 351h1v2h-1zM381 351h2v1h-2zM393 351h1v1h-1zM436 351h1v2h-1zM86 352h1v1h-1zM88 352h1v1h-1zM133 352h1v1h-1zM345 352h1v1h-1zM383 352h1v1h-1zM392 352h1v1h-1zM43 353h1v2h-1zM87 353h1v2h-1zM101 353h1v1h-1zM134 353h1v1h-1zM344 353h1v1h-1zM377 353h1v1h-1zM384 353h2v1h-2zM391 353h1v2h-1zM435 353h1v2h-1zM102 354h1v1h-1zM135 354h1v1h-1zM343 354h1v1h-1zM376 354h1v1h-1zM386 354h1v1h-1zM44 355h1v1h-1zM88 355h1v1h-1zM103 355h1v1h-1zM136 355h1v1h-1zM342 355h1v1h-1zM375 355h1v1h-1zM387 355h2v1h-2zM390 355h1v1h-1zM434 355h1v1h-1zM45 356h1v1h-1zM89 356h1v1h-1zM104 356h1v2h-1zM137 356h2v1h-2zM340 356h2v1h-2zM374 356h1v2h-1zM389 356h1v1h-1zM433 356h1v1h-1zM46 357h1v2h-1zM90 357h1v2h-1zM339 357h1v1h-1zM388 357h1v2h-1zM432 357h1v2h-1zM105 358h1v1h-1zM138 358h1v1h-1zM140 358h1v1h-1zM338 358h1v1h-1zM373 358h1v1h-1zM47 359h1v1h-1zM91 359h1v1h-1zM105 359h2v1h-2zM137 359h1v1h-1zM141 359h1v1h-1zM336 359h2v1h-2zM372 359h1v1h-1zM387 359h1v1h-1zM431 359h1v1h-1zM48 360h1v2h-1zM92 360h1v2h-1zM104 360h1v1h-1zM107 360h1v1h-1zM136 360h1v2h-1zM142 360h2v1h-2zM335 360h1v1h-1zM371 360h1v1h-1zM386 360h1v2h-1zM430 360h1v2h-1zM103 361h1v1h-1zM108 361h1v1h-1zM144 361h1v1h-1zM334 361h1v1h-1zM370 361h1v1h-1zM49 362h1v2h-1zM93 362h1v1h-1zM101 362h2v1h-2zM109 362h1v1h-1zM135 362h1v1h-1zM145 362h1v1h-1zM332 362h2v1h-2zM369 362h2v1h-2zM385 362h1v1h-1zM429 362h1v2h-1zM94 363h1v1h-1zM100 363h1v1h-1zM110 363h1v1h-1zM134 363h1v1h-1zM146 363h2v1h-2zM331 363h1v1h-1zM368 363h1v1h-1zM371 363h1v1h-1zM384 363h1v1h-1zM50 364h1v2h-1zM95 364h1v2h-1zM99 364h1v1h-1zM111 364h1v1h-1zM133 364h1v1h-1zM148 364h1v1h-1zM330 364h1v1h-1zM367 364h1v1h-1zM372 364h1v1h-1zM383 364h1v2h-1zM428 364h1v2h-1zM98 365h1v1h-1zM112 365h1v1h-1zM132 365h1v1h-1zM149 365h2v1h-2zM328 365h2v1h-2zM366 365h1v1h-1zM373 365h1v1h-1zM51 366h1v1h-1zM96 366h2v2h-2zM113 366h1v1h-1zM131 366h1v2h-1zM151 366h2v1h-2zM326 366h2v1h-2zM365 366h1v1h-1zM374 366h2v1h-2zM382 366h1v1h-1zM427 366h1v1h-1zM52 367h1v2h-1zM114 367h1v1h-1zM153 367h1v1h-1zM325 367h1v1h-1zM364 367h1v1h-1zM376 367h1v1h-1zM381 367h1v1h-1zM426 367h1v2h-1zM95 368h1v1h-1zM98 368h1v1h-1zM115 368h1v1h-1zM130 368h1v1h-1zM154 368h1v1h-1zM323 368h2v1h-2zM363 368h1v1h-1zM377 368h1v1h-1zM380 368h1v1h-1zM53 369h1v1h-1zM94 369h1v1h-1zM99 369h1v1h-1zM116 369h1v1h-1zM129 369h1v1h-1zM155 369h2v1h-2zM322 369h1v1h-1zM362 369h1v1h-1zM378 369h2v1h-2zM425 369h1v1h-1zM54 370h1v2h-1zM93 370h1v1h-1zM100 370h1v1h-1zM116 370h2v1h-2zM128 370h1v1h-1zM157 370h1v1h-1zM321 370h1v1h-1zM361 370h1v1h-1zM378 370h1v1h-1zM424 370h1v2h-1zM92 371h1v1h-1zM101 371h1v1h-1zM115 371h1v1h-1zM118 371h1v1h-1zM127 371h1v1h-1zM158 371h2v1h-2zM319 371h2v1h-2zM360 371h1v1h-1zM377 371h1v1h-1zM55 372h1v1h-1zM91 372h1v1h-1zM102 372h1v1h-1zM114 372h1v1h-1zM119 372h1v1h-1zM126 372h1v2h-1zM160 372h2v1h-2zM317 372h2v1h-2zM359 372h1v1h-1zM376 372h1v1h-1zM423 372h1v1h-1zM56 373h1v2h-1zM89 373h2v1h-2zM103 373h1v1h-1zM113 373h1v1h-1zM120 373h1v1h-1zM162 373h1v1h-1zM316 373h1v1h-1zM358 373h2v1h-2zM375 373h1v1h-1zM422 373h1v2h-1zM88 374h1v1h-1zM104 374h1v1h-1zM112 374h1v2h-1zM121 374h2v1h-2zM125 374h1v1h-1zM163 374h1v1h-1zM314 374h2v1h-2zM356 374h2v1h-2zM360 374h1v1h-1zM374 374h1v1h-1zM57 375h1v1h-1zM87 375h1v1h-1zM105 375h1v1h-1zM123 375h2v1h-2zM164 375h2v1h-2zM313 375h1v1h-1zM355 375h1v1h-1zM361 375h1v1h-1zM373 375h1v1h-1zM421 375h1v1h-1zM58 376h1v1h-1zM86 376h1v1h-1zM106 376h1v1h-1zM111 376h1v1h-1zM124 376h1v1h-1zM166 376h2v1h-2zM311 376h2v1h-2zM354 376h1v1h-1zM362 376h1v1h-1zM372 376h1v1h-1zM420 376h1v1h-1zM59 377h1v2h-1zM85 377h1v1h-1zM107 377h1v1h-1zM110 377h1v1h-1zM125 377h1v1h-1zM168 377h2v1h-2zM309 377h3v1h-3zM353 377h1v1h-1zM363 377h1v2h-1zM371 377h1v1h-1zM419 377h1v2h-1zM84 378h1v1h-1zM108 378h2v1h-2zM126 378h2v1h-2zM170 378h2v1h-2zM307 378h2v1h-2zM312 378h1v2h-1zM351 378h2v1h-2zM370 378h1v1h-1zM60 379h1v1h-1zM83 379h1v1h-1zM109 379h1v1h-1zM128 379h1v1h-1zM172 379h2v1h-2zM305 379h2v1h-2zM350 379h1v1h-1zM364 379h1v1h-1zM369 379h1v1h-1zM418 379h1v1h-1zM61 380h1v1h-1zM82 380h1v1h-1zM110 380h1v1h-1zM128 380h2v1h-2zM174 380h2v1h-2zM303 380h2v1h-2zM313 380h1v2h-1zM349 380h1v1h-1zM365 380h1v1h-1zM368 380h1v1h-1zM417 380h1v1h-1zM62 381h1v1h-1zM81 381h1v1h-1zM111 381h1v1h-1zM127 381h1v2h-1zM130 381h1v1h-1zM176 381h2v1h-2zM301 381h2v1h-2zM348 381h1v1h-1zM366 381h2v2h-2zM416 381h1v1h-1zM63 382h1v2h-1zM80 382h1v1h-1zM112 382h1v1h-1zM131 382h2v1h-2zM178 382h2v1h-2zM299 382h2v1h-2zM314 382h1v2h-1zM346 382h2v1h-2zM415 382h1v2h-1zM79 383h1v1h-1zM113 383h2v1h-2zM126 383h1v1h-1zM133 383h1v1h-1zM180 383h3v1h-3zM296 383h3v1h-3zM345 383h1v1h-1zM347 383h1v1h-1zM364 383h2v1h-2zM368 383h1v1h-1zM64 384h1v1h-1zM77 384h2v1h-2zM115 384h1v1h-1zM125 384h1v2h-1zM134 384h1v1h-1zM183 384h2v1h-2zM294 384h2v1h-2zM315 384h1v2h-1zM344 384h1v1h-1zM348 384h1v1h-1zM363 384h1v1h-1zM369 384h1v1h-1zM414 384h1v1h-1zM65 385h1v1h-1zM76 385h1v1h-1zM116 385h1v1h-1zM135 385h2v1h-2zM185 385h4v1h-4zM290 385h4v1h-4zM342 385h2v1h-2zM349 385h1v2h-1zM362 385h1v1h-1zM370 385h1v1h-1zM413 385h1v1h-1zM66 386h1v1h-1zM75 386h1v1h-1zM117 386h2v1h-2zM124 386h1v1h-1zM137 386h2v1h-2zM189 386h4v1h-4zM286 386h4v1h-4zM316 386h1v2h-1zM340 386h2v1h-2zM360 386h2v1h-2zM371 386h1v1h-1zM412 386h1v1h-1zM67 387h1v1h-1zM74 387h1v1h-1zM119 387h1v1h-1zM123 387h1v2h-1zM139 387h1v1h-1zM193 387h3v1h-3zM283 387h3v1h-3zM339 387h1v1h-1zM350 387h1v1h-1zM359 387h1v1h-1zM372 387h1v1h-1zM411 387h1v1h-1zM68 388h1v2h-1zM73 388h1v1h-1zM120 388h2v1h-2zM140 388h1v1h-1zM196 388h4v1h-4zM279 388h4v1h-4zM317 388h1v2h-1zM338 388h1v1h-1zM351 388h1v1h-1zM357 388h2v1h-2zM373 388h1v2h-1zM410 388h1v2h-1zM72 389h1v1h-1zM122 389h1v1h-1zM141 389h2v1h-2zM200 389h4v1h-4zM275 389h4v1h-4zM336 389h2v1h-2zM352 389h1v2h-1zM356 389h1v1h-1zM69 390h1v1h-1zM71 390h1v1h-1zM123 390h1v1h-1zM141 390h1v1h-1zM143 390h1v1h-1zM204 390h2v1h-2zM273 390h2v1h-2zM318 390h1v2h-1zM335 390h1v1h-1zM355 390h1v1h-1zM374 390h1v1h-1zM409 390h1v1h-1zM70 391h1v1h-1zM124 391h2v1h-2zM140 391h1v2h-1zM144 391h1v1h-1zM206 391h4v1h-4zM269 391h4v1h-4zM333 391h2v1h-2zM353 391h2v1h-2zM375 391h1v1h-1zM408 391h1v1h-1zM71 392h1v1h-1zM126 392h1v1h-1zM145 392h2v1h-2zM210 392h11v1h-11zM258 392h11v1h-11zM319 392h1v2h-1zM331 392h2v1h-2zM334 392h1v1h-1zM352 392h1v1h-1zM376 392h1v1h-1zM407 392h1v1h-1zM72 393h1v1h-1zM127 393h1v1h-1zM139 393h1v1h-1zM147 393h2v1h-2zM218 393h1v4h-1zM221 393h5v1h-5zM252 393h6v1h-6zM329 393h2v1h-2zM335 393h1v2h-1zM351 393h1v1h-1zM377 393h1v1h-1zM406 393h1v1h-1zM73 394h1v1h-1zM128 394h1v1h-1zM138 394h1v2h-1zM149 394h2v1h-2zM226 394h26v1h-26zM320 394h1v2h-1zM328 394h1v1h-1zM350 394h1v1h-1zM378 394h1v1h-1zM405 394h1v1h-1zM74 395h1v1h-1zM129 395h2v1h-2zM151 395h2v1h-2zM326 395h2v1h-2zM336 395h1v1h-1zM348 395h2v1h-2zM379 395h1v1h-1zM404 395h1v1h-1zM75 396h1v1h-1zM131 396h1v1h-1zM137 396h1v1h-1zM153 396h2v1h-2zM321 396h1v1h-1zM324 396h2v1h-2zM337 396h1v2h-1zM347 396h1v1h-1zM380 396h1v1h-1zM403 396h1v1h-1zM76 397h1v1h-1zM132 397h1v1h-1zM136 397h1v2h-1zM155 397h1v1h-1zM217 397h1v8h-1zM321 397h3v1h-3zM346 397h1v1h-1zM381 397h1v1h-1zM402 397h1v1h-1zM77 398h1v1h-1zM133 398h2v1h-2zM155 398h3v1h-3zM320 398h2v1h-2zM338 398h1v1h-1zM344 398h2v1h-2zM382 398h1v1h-1zM401 398h1v1h-1zM78 399h1v1h-1zM135 399h1v1h-1zM154 399h1v2h-1zM158 399h2v1h-2zM318 399h3v1h-3zM339 399h1v2h-1zM343 399h1v1h-1zM383 399h1v1h-1zM400 399h1v1h-1zM79 400h1v1h-1zM136 400h2v1h-2zM160 400h3v1h-3zM316 400h2v1h-2zM321 400h1v2h-1zM341 400h2v1h-2zM384 400h1v2h-1zM399 400h1v1h-1zM80 401h1v1h-1zM138 401h1v1h-1zM153 401h1v2h-1zM163 401h2v1h-2zM314 401h2v1h-2zM339 401h2v1h-2zM398 401h1v1h-1zM81 402h1v1h-1zM139 402h2v1h-2zM165 402h2v1h-2zM311 402h3v1h-3zM322 402h1v2h-1zM337 402h2v1h-2zM385 402h1v1h-1zM397 402h1v1h-1zM82 403h1v1h-1zM141 403h2v1h-2zM152 403h1v2h-1zM167 403h2v1h-2zM309 403h2v1h-2zM335 403h2v1h-2zM386 403h1v1h-1zM396 403h1v1h-1zM83 404h1v1h-1zM143 404h2v1h-2zM169 404h2v1h-2zM307 404h2v1h-2zM323 404h1v2h-1zM334 404h1v1h-1zM387 404h1v1h-1zM395 404h1v1h-1zM84 405h1v1h-1zM145 405h2v1h-2zM151 405h1v2h-1zM169 405h1v1h-1zM171 405h3v1h-3zM216 405h1v8h-1zM305 405h2v1h-2zM332 405h2v1h-2zM388 405h1v1h-1zM394 405h1v1h-1zM85 406h1v1h-1zM147 406h1v1h-1zM168 406h1v2h-1zM174 406h3v1h-3zM302 406h3v1h-3zM306 406h1v2h-1zM324 406h1v2h-1zM331 406h1v1h-1zM389 406h1v1h-1zM393 406h1v1h-1zM86 407h1v1h-1zM148 407h3v1h-3zM177 407h3v1h-3zM299 407h3v1h-3zM329 407h2v1h-2zM390 407h1v1h-1zM392 407h1v1h-1zM87 408h1v1h-1zM150 408h1v1h-1zM167 408h1v3h-1zM180 408h3v1h-3zM296 408h3v1h-3zM307 408h1v2h-1zM325 408h1v1h-1zM327 408h2v1h-2zM391 408h1v1h-1zM88 409h1v1h-1zM151 409h2v1h-2zM183 409h3v1h-3zM293 409h3v1h-3zM325 409h2v1h-2zM390 409h1v1h-1zM89 410h1v1h-1zM153 410h2v1h-2zM184 410h1v2h-1zM186 410h3v1h-3zM290 410h3v1h-3zM308 410h1v3h-1zM323 410h2v1h-2zM388 410h2v1h-2zM90 411h2v1h-2zM155 411h3v1h-3zM166 411h1v2h-1zM189 411h3v1h-3zM287 411h3v1h-3zM291 411h1v2h-1zM321 411h2v1h-2zM387 411h1v1h-1zM92 412h1v1h-1zM158 412h3v1h-3zM183 412h1v2h-1zM192 412h3v1h-3zM284 412h3v1h-3zM318 412h3v1h-3zM386 412h1v1h-1zM93 413h1v1h-1zM161 413h2v1h-2zM165 413h1v1h-1zM195 413h4v1h-4zM215 413h1v3h-1zM279 413h5v1h-5zM292 413h1v3h-1zM309 413h1v2h-1zM315 413h3v1h-3zM385 413h1v1h-1zM94 414h1v1h-1zM163 414h3v1h-3zM182 414h1v3h-1zM199 414h6v1h-6zM273 414h6v1h-6zM313 414h2v1h-2zM384 414h1v1h-1zM95 415h1v1h-1zM165 415h2v1h-2zM199 415h1v1h-1zM205 415h7v1h-7zM267 415h6v1h-6zM276 415h1v3h-1zM310 415h3v1h-3zM382 415h2v1h-2zM96 416h2v1h-2zM167 416h3v1h-3zM198 416h1v4h-1zM212 416h6v1h-6zM260 416h7v1h-7zM293 416h1v4h-1zM309 416h2v1h-2zM381 416h1v1h-1zM98 417h1v1h-1zM170 417h3v1h-3zM181 417h1v2h-1zM214 417h1v6h-1zM218 417h6v1h-6zM254 417h7v1h-7zM306 417h3v1h-3zM380 417h1v1h-1zM99 418h1v1h-1zM173 418h2v1h-2zM224 418h30v1h-30zM260 418h1v2h-1zM277 418h1v5h-1zM303 418h3v1h-3zM379 418h1v1h-1zM100 419h2v1h-2zM175 419h2v1h-2zM180 419h1v2h-1zM230 419h1v5h-1zM245 419h1v11h-1zM301 419h2v1h-2zM377 419h2v1h-2zM102 420h1v1h-1zM177 420h2v1h-2zM197 420h1v4h-1zM261 420h1v6h-1zM294 420h1v2h-1zM299 420h2v1h-2zM376 420h1v1h-1zM103 421h1v1h-1zM179 421h3v1h-3zM297 421h2v1h-2zM375 421h1v1h-1zM104 422h2v1h-2zM180 422h1v1h-1zM182 422h4v1h-4zM293 422h4v1h-4zM373 422h2v1h-2zM106 423h1v1h-1zM179 423h1v3h-1zM186 423h4v1h-4zM213 423h1v5h-1zM278 423h1v3h-1zM288 423h5v1h-5zM372 423h1v1h-1zM107 424h2v1h-2zM190 424h5v1h-5zM196 424h1v1h-1zM229 424h1v6h-1zM284 424h4v1h-4zM370 424h2v1h-2zM109 425h1v1h-1zM195 425h4v1h-4zM280 425h4v1h-4zM369 425h1v1h-1zM110 426h2v1h-2zM178 426h1v3h-1zM199 426h4v1h-4zM262 426h1v2h-1zM275 426h5v1h-5zM367 426h2v1h-2zM112 427h1v1h-1zM203 427h7v1h-7zM269 427h6v1h-6zM278 427h1v3h-1zM366 427h1v1h-1zM113 428h2v1h-2zM210 428h6v1h-6zM262 428h7v1h-7zM364 428h2v1h-2zM115 429h2v1h-2zM177 429h1v3h-1zM216 429h7v1h-7zM256 429h6v1h-6zM362 429h2v1h-2zM117 430h2v1h-2zM223 430h33v1h-33zM279 430h1v5h-1zM360 430h2v1h-2zM119 431h1v1h-1zM359 431h1v1h-1zM120 432h2v1h-2zM176 432h1v3h-1zM357 432h2v1h-2zM122 433h1v1h-1zM356 433h1v1h-1zM123 434h1v1h-1zM355 434h1v1h-1zM124 435h2v1h-2zM175 435h1v3h-1zM280 435h1v4h-1zM353 435h2v1h-2zM126 436h2v1h-2zM351 436h2v1h-2zM128 437h2v1h-2zM349 437h2v1h-2zM130 438h2v1h-2zM174 438h1v3h-1zM347 438h2v1h-2zM132 439h2v1h-2zM281 439h1v5h-1zM345 439h2v1h-2zM134 440h2v1h-2zM343 440h2v1h-2zM136 441h2v1h-2zM173 441h1v3h-1zM341 441h2v1h-2zM138 442h2v1h-2zM339 442h2v1h-2zM140 443h2v1h-2zM337 443h2v1h-2zM142 444h2v1h-2zM172 444h1v3h-1zM282 444h1v5h-1zM335 444h2v1h-2zM144 445h2v1h-2zM333 445h2v1h-2zM146 446h3v1h-3zM330 446h3v1h-3zM149 447h2v1h-2zM171 447h1v3h-1zM328 447h2v1h-2zM151 448h2v1h-2zM326 448h2v1h-2zM153 449h3v1h-3zM283 449h1v4h-1zM323 449h3v1h-3zM156 450h2v1h-2zM170 450h1v3h-1zM320 450h3v1h-3zM158 451h3v1h-3zM318 451h2v1h-2zM161 452h3v1h-3zM315 452h3v1h-3zM164 453h2v1h-2zM169 453h1v2h-1zM284 453h1v5h-1zM313 453h2v1h-2zM166 454h2v1h-2zM311 454h2v1h-2zM168 455h3v1h-3zM307 455h4v1h-4zM171 456h4v1h-4zM303 456h4v1h-4zM175 457h4v1h-4zM300 457h3v1h-3zM179 458h4v1h-4zM285 458h1v3h-1zM296 458h4v1h-4zM183 459h3v1h-3zM292 459h4v1h-4zM186 460h4v1h-4zM288 460h4v1h-4zM190 461h4v1h-4zM284 461h4v1h-4zM194 462h4v1h-4zM280 462h4v1h-4zM198 463h6v1h-6zM274 463h6v1h-6zM204 464h8v1h-8zM266 464h8v1h-8zM212 465h16v1h-16zM250 465h16v1h-16zM228 466h22v1h-22z"/>
<path fill="#c0c0c0" d="M0 0h640v1h-640zM0 1h1v478h-1zM479 1h1v478h-1zM639 1h1v478h-1zM271 4h1v4h-1zM270 8h1v6h-1zM270 15h1v1h-1zM269 16h1v7h-1zM268 23h1v7h-1zM267 30h1v8h-1zM266 38h1v7h-1zM265 45h1v5h-1zM264 52h1v4h-1zM263 60h1v2h-1zM263 66h1v1h-1zM260 87h1v2h-1zM259 89h1v7h-1zM258 96h1v8h-1zM257 104h1v7h-1zM256 111h1v7h-1zM255 118h1v8h-1zM254 126h1v7h-1zM253 133h1v4h-1zM253 138h1v2h-1zM252 140h1v8h-1zM251 149h1v6h-1zM250 155h1v3h-1zM250 159h1v3h-1zM249 162h1v8h-1zM248 170h1v7h-1zM247 177h1v7h-1zM246 184h1v8h-1zM245 192h1v7h-1zM244 199h1v7h-1zM243 206h1v8h-1zM242 214h1v7h-1zM241 221h1v7h-1zM240 228h1v8h-1zM239 236h1v3h-1zM2 239h10v1h-10zM13 239h35v1h-35zM85 239h154v1h-154zM240 239h104v1h-104zM345 239h49v1h-49zM431 239h35v1h-35zM467 239h10v1h-10zM239 240h1v3h-1zM238 243h1v8h-1zM237 251h1v7h-1zM236 258h1v7h-1zM235 265h1v8h-1zM234 273h1v7h-1zM233 280h1v7h-1zM232 287h1v8h-1zM231 295h1v7h-1zM230 302h1v7h-1zM229 309h1v8h-1zM228 317h1v7h-1zM227 324h1v7h-1zM226 331h1v8h-1zM225 339h1v7h-1zM224 346h1v7h-1zM223 353h1v8h-1zM222 361h1v7h-1zM221 368h1v7h-1zM220 375h1v8h-1zM219 383h1v7h-1zM218 390h1v2h-1zM215 412h1v1h-1zM215 417h1v2h-1zM214 423h1v4h-1zM213 429h1v5h-1zM212 434h1v7h-1zM211 441h1v8h-1zM210 449h1v7h-1zM209 456h1v7h-1zM208 463h1v1h-1zM208 465h1v6h-1zM207 471h1v4h-1zM0 479h640v1h-640z"/>
<path fill="#808080" d="M223 49h1v6h-1zM226 49h1v6h-1zM230 49h1v11h-1zM236 49h1v5h-1zM239 49h1v11h-1zM242 49h1v11h-1zM245 49h1v11h-1zM252 49h1v6h-1zM255 49h1v6h-1zM220 50h1v5h-1zM259 50h1v5h-1zM210 51h1v5h-1zM213 51h1v2h-1zM262 51h1v5h-1zM203 52h1v3h-1zM207 52h1v5h-1zM269 52h1v2h-1zM272 52h1v2h-1zM214 53h1v6h-1zM275 53h1v2h-1zM278 53h1v3h-1zM197 54h1v2h-1zM237 54h1v6h-1zM268 54h1v5h-1zM271 54h1v6h-1zM190 55h1v2h-1zM194 55h1v2h-1zM204 55h1v5h-1zM221 55h1v6h-1zM224 55h1v5h-1zM227 55h1v5h-1zM251 55h1v5h-1zM254 55h1v6h-1zM258 55h1v6h-1zM274 55h1v6h-1zM285 55h1v1h-1zM187 56h1v2h-1zM198 56h1v6h-1zM211 56h1v6h-1zM261 56h1v6h-1zM277 56h1v5h-1zM284 56h1v4h-1zM288 56h1v1h-1zM291 56h1v2h-1zM191 57h1v3h-1zM195 57h1v6h-1zM208 57h1v6h-1zM287 57h1v3h-1zM295 57h1v2h-1zM181 58h1v2h-1zM188 58h1v3h-1zM290 58h1v3h-1zM178 59h1v2h-1zM215 59h1v3h-1zM267 59h1v3h-1zM294 59h1v2h-1zM182 60h1v3h-1zM192 60h1v4h-1zM205 60h1v3h-1zM270 60h1v3h-1zM283 60h1v4h-1zM286 60h1v4h-1zM301 60h1v1h-1zM174 61h1v1h-1zM179 61h1v3h-1zM189 61h1v4h-1zM273 61h1v3h-1zM276 61h1v3h-1zM289 61h1v4h-1zM293 61h1v3h-1zM300 61h1v2h-1zM304 61h1v1h-1zM171 62h1v1h-1zM175 62h1v2h-1zM199 62h1v2h-1zM303 62h1v2h-1zM307 62h1v1h-1zM172 63h1v2h-1zM183 63h1v4h-1zM196 63h1v2h-1zM299 63h1v3h-1zM306 63h1v2h-1zM310 63h1v2h-1zM165 64h1v2h-1zM176 64h1v3h-1zM180 64h1v4h-1zM193 64h1v2h-1zM282 64h1v1h-1zM285 64h1v2h-1zM292 64h1v2h-1zM302 64h1v3h-1zM173 65h1v3h-1zM190 65h1v2h-1zM288 65h1v2h-1zM305 65h1v3h-1zM309 65h1v2h-1zM162 66h1v1h-1zM166 66h1v2h-1zM291 66h1v2h-1zM298 66h1v2h-1zM316 66h1v1h-1zM159 67h1v1h-1zM163 67h1v2h-1zM177 67h1v2h-1zM184 67h1v2h-1zM301 67h1v2h-1zM308 67h1v2h-1zM315 67h1v2h-1zM319 67h1v2h-1zM156 68h1v1h-1zM160 68h1v2h-1zM167 68h1v2h-1zM174 68h1v2h-1zM181 68h1v2h-1zM297 68h1v2h-1zM304 68h1v2h-1zM322 68h1v2h-1zM157 69h1v2h-1zM164 69h1v3h-1zM178 69h1v2h-1zM300 69h1v2h-1zM307 69h1v2h-1zM314 69h1v3h-1zM318 69h1v2h-1zM161 70h1v3h-1zM168 70h1v2h-1zM175 70h1v2h-1zM303 70h1v2h-1zM321 70h1v2h-1zM325 70h1v1h-1zM150 71h1v1h-1zM158 71h1v2h-1zM306 71h1v2h-1zM317 71h1v2h-1zM324 71h1v2h-1zM151 72h1v2h-1zM165 72h1v2h-1zM169 72h1v2h-1zM313 72h1v2h-1zM320 72h1v3h-1zM148 73h1v2h-1zM159 73h1v2h-1zM162 73h1v2h-1zM316 73h1v2h-1zM323 73h1v3h-1zM331 73h1v1h-1zM152 74h1v2h-1zM166 74h1v2h-1zM312 74h1v2h-1zM330 74h1v2h-1zM145 75h1v2h-1zM149 75h1v2h-1zM160 75h1v2h-1zM163 75h1v2h-1zM315 75h1v2h-1zM319 75h1v2h-1zM333 75h1v2h-1zM141 76h1v1h-1zM153 76h1v2h-1zM322 76h1v2h-1zM329 76h1v2h-1zM142 77h1v2h-1zM146 77h1v1h-1zM150 77h1v2h-1zM161 77h1v1h-1zM318 77h1v2h-1zM332 77h1v2h-1zM336 77h1v2h-1zM147 78h1v2h-1zM154 78h1v2h-1zM321 78h1v2h-1zM328 78h1v2h-1zM340 78h1v1h-1zM136 79h1v1h-1zM143 79h1v1h-1zM151 79h1v2h-1zM331 79h1v2h-1zM335 79h1v2h-1zM339 79h1v2h-1zM137 80h1v2h-1zM144 80h1v2h-1zM148 80h1v1h-1zM155 80h1v1h-1zM327 80h1v2h-1zM133 81h1v1h-1zM149 81h1v2h-1zM152 81h1v2h-1zM330 81h1v2h-1zM334 81h1v2h-1zM338 81h1v1h-1zM345 81h1v1h-1zM134 82h1v2h-1zM138 82h1v2h-1zM145 82h1v1h-1zM326 82h1v1h-1zM337 82h1v2h-1zM344 82h1v2h-1zM146 83h1v2h-1zM150 83h1v1h-1zM329 83h1v1h-1zM333 83h1v2h-1zM131 84h1v2h-1zM135 84h1v1h-1zM139 84h1v2h-1zM336 84h1v1h-1zM343 84h1v1h-1zM347 84h1v2h-1zM136 85h1v2h-1zM332 85h1v1h-1zM335 85h1v2h-1zM342 85h1v2h-1zM128 86h1v1h-1zM132 86h1v1h-1zM140 86h1v2h-1zM346 86h1v1h-1zM350 86h1v2h-1zM129 87h1v2h-1zM133 87h1v2h-1zM137 87h1v1h-1zM341 87h1v1h-1zM345 87h1v2h-1zM138 88h1v2h-1zM141 88h1v1h-1zM340 88h1v2h-1zM349 88h1v1h-1zM353 88h1v1h-1zM130 89h1v1h-1zM134 89h1v1h-1zM344 89h1v1h-1zM348 89h1v2h-1zM352 89h1v2h-1zM123 90h1v1h-1zM131 90h1v1h-1zM135 90h1v2h-1zM139 90h1v1h-1zM339 90h1v1h-1zM343 90h1v2h-1zM124 91h1v1h-1zM132 91h1v2h-1zM347 91h1v1h-1zM351 91h1v1h-1zM120 92h1v1h-1zM125 92h1v1h-1zM136 92h1v1h-1zM342 92h1v1h-1zM346 92h1v2h-1zM350 92h1v1h-1zM358 92h1v1h-1zM117 93h1v1h-1zM121 93h1v1h-1zM126 93h1v2h-1zM133 93h1v1h-1zM349 93h1v2h-1zM357 93h1v2h-1zM361 93h1v1h-1zM118 94h1v1h-1zM122 94h1v1h-1zM345 94h1v1h-1zM360 94h1v2h-1zM119 95h1v1h-1zM123 95h1v2h-1zM127 95h1v1h-1zM348 95h1v1h-1zM356 95h1v1h-1zM115 96h1v1h-1zM120 96h1v1h-1zM128 96h1v1h-1zM355 96h1v1h-1zM359 96h1v1h-1zM364 96h1v1h-1zM116 97h1v1h-1zM121 97h1v2h-1zM124 97h1v1h-1zM129 97h1v1h-1zM354 97h1v2h-1zM358 97h1v2h-1zM363 97h1v1h-1zM117 98h1v1h-1zM125 98h1v1h-1zM362 98h1v1h-1zM366 98h1v1h-1zM118 99h1v2h-1zM122 99h1v1h-1zM126 99h1v1h-1zM353 99h1v1h-1zM357 99h1v1h-1zM361 99h1v1h-1zM365 99h1v1h-1zM109 100h1v1h-1zM123 100h1v1h-1zM356 100h1v2h-1zM360 100h1v2h-1zM364 100h1v1h-1zM110 101h1v1h-1zM119 101h1v1h-1zM124 101h1v1h-1zM363 101h1v1h-1zM107 102h1v1h-1zM111 102h1v1h-1zM120 102h1v1h-1zM355 102h1v1h-1zM359 102h1v1h-1zM362 102h1v2h-1zM371 102h1v1h-1zM108 103h1v1h-1zM112 103h1v1h-1zM121 103h1v1h-1zM169 103h1v1h-1zM358 103h1v1h-1zM370 103h1v1h-1zM105 104h1v1h-1zM109 104h1v1h-1zM113 104h1v1h-1zM361 104h1v1h-1zM369 104h1v1h-1zM106 105h1v1h-1zM110 105h1v1h-1zM114 105h1v1h-1zM170 105h1v1h-1zM360 105h1v1h-1zM368 105h1v1h-1zM374 105h1v1h-1zM107 106h1v1h-1zM111 106h1v2h-1zM115 106h1v1h-1zM367 106h1v2h-1zM373 106h1v1h-1zM102 107h1v1h-1zM108 107h1v1h-1zM116 107h1v1h-1zM171 107h1v1h-1zM372 107h1v1h-1zM376 107h1v1h-1zM103 108h1v1h-1zM109 108h1v2h-1zM112 108h1v1h-1zM366 108h1v1h-1zM370 108h2v1h-2zM375 108h1v1h-1zM104 109h1v1h-1zM113 109h1v1h-1zM172 109h1v1h-1zM365 109h1v1h-1zM369 109h1v1h-1zM374 109h1v1h-1zM378 109h1v1h-1zM105 110h1v1h-1zM110 110h1v1h-1zM114 110h1v1h-1zM364 110h1v1h-1zM368 110h1v1h-1zM372 110h2v1h-2zM377 110h1v1h-1zM106 111h2v1h-2zM111 111h1v1h-1zM173 111h1v1h-1zM367 111h1v1h-1zM371 111h1v1h-1zM376 111h1v1h-1zM98 112h1v1h-1zM108 112h1v1h-1zM112 112h1v1h-1zM366 112h1v1h-1zM370 112h1v1h-1zM375 112h1v1h-1zM99 113h1v1h-1zM109 113h1v1h-1zM174 113h1v1h-1zM369 113h1v1h-1zM374 113h1v1h-1zM96 114h1v1h-1zM100 114h1v1h-1zM110 114h1v1h-1zM368 114h1v1h-1zM373 114h1v1h-1zM97 115h1v1h-1zM101 115h1v1h-1zM175 115h1v1h-1zM372 115h1v1h-1zM382 115h1v1h-1zM98 116h1v1h-1zM102 116h2v1h-2zM371 116h1v1h-1zM381 116h1v1h-1zM93 117h1v1h-1zM99 117h1v1h-1zM104 117h1v1h-1zM176 117h1v1h-1zM379 117h2v1h-2zM385 117h1v1h-1zM94 118h2v1h-2zM100 118h2v1h-2zM105 118h1v1h-1zM378 118h1v1h-1zM384 118h1v1h-1zM96 119h1v1h-1zM102 119h1v1h-1zM177 119h1v1h-1zM377 119h1v1h-1zM383 119h1v1h-1zM92 120h1v1h-1zM97 120h2v1h-2zM103 120h1v1h-1zM376 120h1v1h-1zM381 120h2v1h-2zM386 120h1v1h-1zM93 121h2v1h-2zM99 121h1v1h-1zM178 121h1v1h-1zM339 121h1v1h-1zM375 121h1v1h-1zM380 121h1v1h-1zM385 121h1v1h-1zM95 122h1v1h-1zM100 122h2v1h-2zM379 122h1v1h-1zM383 122h2v1h-2zM96 123h1v1h-1zM102 123h1v1h-1zM179 123h1v1h-1zM337 123h1v1h-1zM378 123h1v1h-1zM382 123h1v1h-1zM388 123h1v1h-1zM97 124h2v1h-2zM377 124h1v1h-1zM381 124h1v1h-1zM387 124h1v1h-1zM88 125h1v1h-1zM99 125h1v1h-1zM180 125h1v1h-1zM336 125h1v1h-1zM380 125h1v1h-1zM385 125h2v1h-2zM89 126h2v1h-2zM379 126h1v1h-1zM384 126h1v1h-1zM91 127h1v1h-1zM181 127h1v1h-1zM383 127h1v1h-1zM86 128h2v1h-2zM92 128h1v1h-1zM382 128h1v1h-1zM392 128h1v1h-1zM88 129h1v1h-1zM93 129h2v1h-2zM182 129h1v1h-1zM332 129h1v1h-1zM381 129h1v1h-1zM390 129h2v1h-2zM89 130h2v1h-2zM95 130h1v1h-1zM389 130h1v1h-1zM84 131h2v1h-2zM91 131h1v1h-1zM183 131h1v1h-1zM331 131h1v1h-1zM388 131h1v1h-1zM393 131h2v1h-2zM86 132h1v1h-1zM92 132h2v1h-2zM386 132h2v1h-2zM392 132h1v1h-1zM81 133h1v1h-1zM87 133h2v1h-2zM94 133h1v1h-1zM184 133h1v1h-1zM329 133h1v1h-1zM385 133h1v1h-1zM390 133h2v1h-2zM397 133h1v1h-1zM82 134h2v1h-2zM89 134h1v1h-1zM389 134h1v1h-1zM395 134h2v1h-2zM84 135h1v1h-1zM90 135h2v1h-2zM185 135h1v1h-1zM327 135h1v1h-1zM387 135h2v1h-2zM394 135h1v1h-1zM85 136h2v1h-2zM92 136h1v1h-1zM386 136h1v1h-1zM392 136h2v1h-2zM399 136h1v1h-1zM87 137h1v1h-1zM186 137h1v1h-1zM325 137h1v1h-1zM391 137h1v1h-1zM397 137h2v1h-2zM78 138h1v1h-1zM88 138h2v1h-2zM389 138h2v1h-2zM395 138h2v1h-2zM79 139h2v1h-2zM90 139h1v1h-1zM187 139h1v1h-1zM388 139h1v1h-1zM393 139h2v1h-2zM81 140h1v1h-1zM391 140h2v1h-2zM76 141h1v1h-1zM82 141h2v1h-2zM188 141h1v1h-1zM322 141h1v1h-1zM390 141h1v1h-1zM402 141h1v1h-1zM77 142h2v1h-2zM84 142h1v1h-1zM400 142h2v1h-2zM79 143h2v1h-2zM85 143h2v1h-2zM189 143h1v1h-1zM320 143h1v1h-1zM399 143h1v1h-1zM81 144h2v1h-2zM397 144h2v1h-2zM75 145h2v1h-2zM83 145h2v1h-2zM190 145h1v1h-1zM319 145h1v1h-1zM396 145h1v1h-1zM402 145h2v1h-2zM77 146h2v1h-2zM85 146h1v1h-1zM394 146h2v1h-2zM401 146h1v1h-1zM73 147h1v1h-1zM79 147h2v1h-2zM191 147h1v1h-1zM317 147h1v1h-1zM399 147h2v1h-2zM405 147h1v1h-1zM74 148h2v1h-2zM81 148h2v1h-2zM398 148h1v1h-1zM403 148h2v1h-2zM76 149h2v1h-2zM83 149h1v1h-1zM192 149h1v1h-1zM315 149h1v1h-1zM396 149h2v1h-2zM401 149h2v1h-2zM78 150h2v1h-2zM395 150h1v1h-1zM399 150h2v1h-2zM407 150h1v1h-1zM80 151h2v1h-2zM193 151h1v1h-1zM314 151h1v1h-1zM397 151h2v1h-2zM405 151h2v1h-2zM82 152h1v1h-1zM396 152h1v1h-1zM403 152h2v1h-2zM69 153h2v1h-2zM194 153h1v1h-1zM312 153h1v1h-1zM401 153h2v1h-2zM71 154h2v1h-2zM399 154h2v1h-2zM73 155h3v1h-3zM195 155h1v1h-1zM310 155h1v1h-1zM398 155h1v1h-1zM68 156h2v1h-2zM76 156h2v1h-2zM410 156h1v1h-1zM70 157h2v1h-2zM78 157h2v1h-2zM197 157h1v1h-1zM308 157h1v1h-1zM408 157h2v1h-2zM72 158h3v1h-3zM406 158h2v1h-2zM67 159h2v1h-2zM75 159h2v1h-2zM198 159h1v1h-1zM307 159h1v1h-1zM404 159h2v1h-2zM411 159h1v1h-1zM69 160h2v1h-2zM77 160h1v1h-1zM402 160h2v1h-2zM409 160h2v1h-2zM71 161h2v1h-2zM199 161h1v1h-1zM305 161h1v1h-1zM348 161h1v1h-1zM401 161h1v1h-1zM406 161h3v1h-3zM66 162h1v1h-1zM73 162h2v1h-2zM347 162h1v1h-1zM404 162h2v1h-2zM412 162h1v1h-1zM67 163h2v1h-2zM75 163h2v1h-2zM200 163h1v1h-1zM303 163h1v1h-1zM346 163h1v2h-1zM402 163h2v1h-2zM410 163h2v1h-2zM69 164h3v1h-3zM407 164h3v1h-3zM72 165h2v1h-2zM105 165h1v1h-1zM201 165h1v1h-1zM302 165h1v1h-1zM345 165h1v1h-1zM405 165h2v1h-2zM413 165h2v1h-2zM74 166h2v1h-2zM107 166h1v1h-1zM344 166h1v1h-1zM403 166h2v1h-2zM411 166h2v1h-2zM109 167h1v1h-1zM202 167h1v1h-1zM300 167h1v1h-1zM343 167h1v2h-1zM409 167h2v1h-2zM63 168h2v1h-2zM111 168h1v1h-1zM407 168h2v1h-2zM65 169h2v1h-2zM113 169h1v1h-1zM125 169h2v1h-2zM203 169h1v1h-1zM298 169h1v1h-1zM342 169h1v1h-1zM405 169h2v1h-2zM67 170h2v1h-2zM127 170h3v1h-3zM62 171h1v1h-1zM69 171h2v1h-2zM117 171h1v1h-1zM130 171h3v1h-3zM204 171h1v1h-1zM297 171h1v1h-1zM416 171h1v1h-1zM63 172h2v1h-2zM71 172h2v1h-2zM119 172h1v1h-1zM133 172h2v1h-2zM414 172h2v1h-2zM65 173h3v1h-3zM121 173h1v1h-1zM205 173h1v1h-1zM295 173h1v1h-1zM411 173h3v1h-3zM61 174h1v1h-1zM68 174h2v1h-2zM409 174h2v1h-2zM417 174h1v1h-1zM62 175h2v1h-2zM70 175h2v1h-2zM123 175h1v1h-1zM206 175h1v1h-1zM293 175h1v1h-1zM407 175h2v1h-2zM415 175h2v1h-2zM64 176h3v1h-3zM125 176h1v1h-1zM412 176h3v1h-3zM59 177h2v1h-2zM67 177h2v1h-2zM127 177h1v1h-1zM207 177h1v1h-1zM410 177h2v1h-2zM61 178h2v1h-2zM69 178h2v1h-2zM129 178h1v1h-1zM408 178h2v1h-2zM418 178h2v1h-2zM63 179h3v1h-3zM131 179h1v1h-1zM208 179h1v1h-1zM290 179h1v1h-1zM414 179h4v1h-4zM66 180h2v1h-2zM133 180h1v1h-1zM381 180h1v1h-1zM411 180h3v1h-3zM68 181h2v1h-2zM135 181h1v1h-1zM209 181h1v1h-1zM288 181h1v1h-1zM379 181h1v1h-1zM409 181h2v1h-2zM419 181h2v1h-2zM137 182h1v1h-1zM415 182h4v1h-4zM57 183h2v1h-2zM139 183h1v1h-1zM210 183h1v1h-1zM286 183h1v1h-1zM375 183h1v1h-1zM412 183h3v1h-3zM59 184h2v1h-2zM373 184h1v1h-1zM410 184h2v1h-2zM61 185h3v1h-3zM141 185h1v1h-1zM211 185h1v1h-1zM285 185h1v1h-1zM369 185h1v1h-1zM371 185h1v1h-1zM64 186h2v1h-2zM143 186h1v1h-1zM56 187h2v1h-2zM66 187h2v1h-2zM145 187h1v1h-1zM212 187h1v1h-1zM283 187h1v1h-1zM365 187h1v1h-1zM421 187h2v1h-2zM58 188h3v1h-3zM147 188h1v1h-1zM363 188h1v1h-1zM417 188h4v1h-4zM61 189h4v1h-4zM149 189h1v1h-1zM213 189h1v1h-1zM359 189h1v1h-1zM361 189h1v1h-1zM414 189h3v1h-3zM55 190h2v1h-2zM65 190h2v1h-2zM151 190h1v1h-1zM357 190h1v1h-1zM412 190h2v1h-2zM422 190h2v1h-2zM57 191h3v1h-3zM153 191h1v1h-1zM214 191h1v1h-1zM280 191h1v1h-1zM355 191h1v1h-1zM418 191h4v1h-4zM60 192h4v1h-4zM155 192h1v1h-1zM353 192h1v1h-1zM415 192h3v1h-3zM55 193h1v1h-1zM64 193h2v1h-2zM157 193h1v1h-1zM215 193h1v1h-1zM278 193h1v1h-1zM351 193h1v1h-1zM413 193h2v1h-2zM56 194h4v1h-4zM347 194h1v1h-1zM349 194h1v1h-1zM422 194h2v1h-2zM60 195h4v1h-4zM159 195h1v1h-1zM216 195h1v1h-1zM276 195h1v1h-1zM345 195h1v1h-1zM416 195h6v1h-6zM64 196h1v1h-1zM161 196h1v1h-1zM343 196h1v1h-1zM414 196h2v1h-2zM163 197h1v1h-1zM217 197h1v1h-1zM275 197h1v1h-1zM341 197h1v1h-1zM423 197h2v1h-2zM165 198h1v1h-1zM417 198h6v1h-6zM167 199h1v1h-1zM218 199h1v1h-1zM273 199h1v1h-1zM335 199h1v1h-1zM337 199h1v1h-1zM415 199h2v1h-2zM53 200h3v1h-3zM169 200h1v1h-1zM56 201h5v1h-5zM171 201h1v1h-1zM219 201h1v1h-1zM271 201h1v1h-1zM331 201h1v1h-1zM61 202h3v1h-3zM173 202h1v1h-1zM329 202h1v1h-1zM52 203h3v1h-3zM175 203h1v1h-1zM220 203h1v1h-1zM270 203h1v1h-1zM424 203h3v1h-3zM55 204h6v1h-6zM323 204h1v1h-1zM325 204h1v1h-1zM419 204h5v1h-5zM61 205h2v1h-2zM177 205h1v1h-1zM221 205h1v1h-1zM268 205h1v1h-1zM321 205h1v1h-1zM416 205h3v1h-3zM52 206h2v1h-2zM179 206h1v1h-1zM319 206h1v1h-1zM54 207h6v1h-6zM181 207h1v1h-1zM222 207h1v1h-1zM266 207h1v1h-1zM317 207h1v1h-1zM422 207h5v1h-5zM60 208h3v1h-3zM183 208h1v1h-1zM313 208h1v1h-1zM315 208h1v1h-1zM416 208h6v1h-6zM52 209h2v1h-2zM185 209h1v1h-1zM223 209h1v1h-1zM264 209h1v1h-1zM311 209h1v1h-1zM54 210h5v1h-5zM187 210h1v1h-1zM309 210h1v1h-1zM422 210h6v1h-6zM59 211h3v1h-3zM189 211h1v1h-1zM224 211h1v1h-1zM263 211h1v1h-1zM307 211h1v1h-1zM417 211h5v1h-5zM191 212h1v1h-1zM305 212h1v1h-1zM193 213h1v1h-1zM226 213h1v1h-1zM261 213h1v1h-1zM301 213h1v1h-1zM303 213h1v1h-1zM426 213h2v1h-2zM299 214h1v1h-1zM420 214h6v1h-6zM195 215h1v1h-1zM227 215h1v1h-1zM259 215h1v1h-1zM297 215h1v1h-1zM417 215h3v1h-3zM50 216h6v1h-6zM197 216h1v1h-1zM295 216h1v1h-1zM56 217h6v1h-6zM199 217h1v1h-1zM228 217h1v1h-1zM258 217h1v1h-1zM293 217h1v1h-1zM201 218h1v1h-1zM289 218h1v1h-1zM291 218h1v1h-1zM50 219h5v1h-5zM203 219h1v1h-1zM229 219h1v1h-1zM256 219h1v1h-1zM287 219h1v1h-1zM55 220h6v1h-6zM205 220h1v1h-1zM285 220h1v1h-1zM423 220h6v1h-6zM207 221h1v1h-1zM230 221h1v1h-1zM254 221h1v1h-1zM283 221h1v1h-1zM418 221h5v1h-5zM209 222h1v1h-1zM279 222h1v1h-1zM281 222h1v1h-1zM49 223h6v1h-6zM211 223h1v1h-1zM231 223h1v1h-1zM253 223h1v1h-1zM277 223h1v1h-1zM424 223h6v1h-6zM55 224h5v1h-5zM275 224h1v1h-1zM419 224h5v1h-5zM213 225h1v1h-1zM232 225h1v1h-1zM251 225h1v1h-1zM273 225h1v1h-1zM49 226h6v1h-6zM215 226h1v1h-1zM271 226h1v1h-1zM424 226h6v1h-6zM55 227h5v1h-5zM217 227h1v1h-1zM233 227h1v1h-1zM249 227h1v1h-1zM267 227h1v1h-1zM269 227h1v1h-1zM419 227h5v1h-5zM219 228h1v1h-1zM265 228h1v1h-1zM221 229h1v1h-1zM234 229h1v1h-1zM247 229h1v1h-1zM263 229h1v1h-1zM223 230h1v1h-1zM261 230h1v1h-1zM419 230h11v1h-11zM225 231h1v1h-1zM235 231h1v1h-1zM246 231h1v1h-1zM259 231h1v1h-1zM227 232h1v1h-1zM255 232h1v1h-1zM257 232h1v1h-1zM49 233h11v1h-11zM229 233h1v1h-1zM236 233h1v1h-1zM244 233h1v1h-1zM253 233h1v1h-1zM251 234h1v1h-1zM231 235h1v1h-1zM237 235h1v1h-1zM242 235h1v1h-1zM249 235h1v1h-1zM49 236h11v1h-11zM233 236h1v1h-1zM247 236h1v1h-1zM424 236h6v1h-6zM235 237h1v1h-1zM238 237h1v1h-1zM241 237h1v2h-1zM243 237h1v1h-1zM245 237h1v1h-1zM419 237h5v1h-5zM237 238h1v1h-1zM49 239h11v1h-11zM239 239h1v1h-1zM419 239h11v1h-11zM237 240h1v2h-1zM241 240h1v1h-1zM54 241h6v1h-6zM233 241h1v1h-1zM235 241h1v1h-1zM240 241h1v1h-1zM243 241h1v1h-1zM49 242h5v1h-5zM231 242h1v1h-1zM245 242h1v1h-1zM419 242h11v1h-11zM229 243h1v1h-1zM236 243h1v1h-1zM241 243h1v1h-1zM247 243h1v1h-1zM227 244h1v1h-1zM225 245h1v1h-1zM234 245h1v1h-1zM242 245h1v1h-1zM249 245h1v1h-1zM419 245h11v1h-11zM221 246h1v1h-1zM223 246h1v1h-1zM251 246h1v1h-1zM219 247h1v1h-1zM232 247h1v1h-1zM243 247h1v1h-1zM253 247h1v1h-1zM49 248h11v1h-11zM217 248h1v1h-1zM255 248h1v1h-1zM215 249h1v1h-1zM231 249h1v1h-1zM244 249h1v1h-1zM257 249h1v1h-1zM213 250h1v1h-1zM259 250h1v1h-1zM55 251h5v1h-5zM209 251h1v1h-1zM211 251h1v1h-1zM229 251h1v1h-1zM245 251h1v1h-1zM261 251h1v1h-1zM419 251h5v1h-5zM49 252h6v1h-6zM207 252h1v1h-1zM263 252h1v1h-1zM424 252h6v1h-6zM205 253h1v1h-1zM227 253h1v1h-1zM246 253h1v1h-1zM265 253h1v1h-1zM55 254h6v1h-6zM203 254h1v1h-1zM418 254h6v1h-6zM49 255h6v1h-6zM201 255h1v1h-1zM225 255h1v1h-1zM247 255h1v1h-1zM267 255h1v1h-1zM424 255h6v1h-6zM197 256h1v1h-1zM199 256h1v1h-1zM269 256h1v1h-1zM55 257h6v1h-6zM195 257h1v1h-1zM224 257h1v1h-1zM248 257h1v1h-1zM271 257h1v1h-1zM50 258h5v1h-5zM193 258h1v1h-1zM273 258h1v1h-1zM418 258h5v1h-5zM191 259h1v1h-1zM222 259h1v1h-1zM249 259h1v1h-1zM275 259h1v1h-1zM423 259h6v1h-6zM187 260h1v1h-1zM189 260h1v1h-1zM277 260h1v1h-1zM185 261h1v1h-1zM220 261h1v1h-1zM250 261h1v1h-1zM279 261h1v1h-1zM417 261h6v1h-6zM183 262h1v1h-1zM281 262h1v1h-1zM423 262h5v1h-5zM59 263h3v1h-3zM181 263h1v1h-1zM219 263h1v1h-1zM251 263h1v1h-1zM283 263h1v1h-1zM53 264h6v1h-6zM179 264h1v1h-1zM51 265h2v1h-2zM175 265h1v1h-1zM177 265h1v1h-1zM217 265h1v1h-1zM252 265h1v1h-1zM285 265h1v1h-1zM173 266h1v1h-1zM287 266h1v1h-1zM56 267h6v1h-6zM171 267h1v1h-1zM215 267h1v1h-1zM254 267h1v1h-1zM289 267h1v1h-1zM417 267h3v1h-3zM51 268h5v1h-5zM169 268h1v1h-1zM291 268h1v1h-1zM420 268h5v1h-5zM167 269h1v1h-1zM214 269h1v1h-1zM255 269h1v1h-1zM293 269h1v1h-1zM425 269h2v1h-2zM57 270h6v1h-6zM163 270h1v1h-1zM165 270h1v1h-1zM295 270h1v1h-1zM416 270h3v1h-3zM52 271h5v1h-5zM161 271h1v1h-1zM212 271h1v1h-1zM256 271h1v1h-1zM297 271h1v1h-1zM419 271h6v1h-6zM159 272h1v1h-1zM299 272h1v1h-1zM425 272h2v1h-2zM60 273h3v1h-3zM157 273h1v1h-1zM210 273h1v1h-1zM257 273h1v1h-1zM301 273h1v1h-1zM415 273h3v1h-3zM55 274h5v1h-5zM153 274h1v1h-1zM155 274h1v1h-1zM418 274h6v1h-6zM53 275h2v1h-2zM151 275h1v1h-1zM208 275h1v1h-1zM258 275h1v1h-1zM303 275h1v1h-1zM424 275h2v1h-2zM149 276h1v1h-1zM305 276h1v1h-1zM415 276h3v1h-3zM147 277h1v1h-1zM207 277h1v1h-1zM259 277h1v1h-1zM307 277h1v1h-1zM418 277h5v1h-5zM145 278h1v1h-1zM309 278h1v1h-1zM423 278h3v1h-3zM62 279h3v1h-3zM141 279h1v1h-1zM143 279h1v1h-1zM205 279h1v1h-1zM260 279h1v1h-1zM311 279h1v1h-1zM56 280h6v1h-6zM139 280h1v1h-1zM313 280h1v1h-1zM54 281h2v1h-2zM137 281h1v1h-1zM203 281h1v1h-1zM261 281h1v1h-1zM315 281h1v1h-1zM63 282h2v1h-2zM135 282h1v1h-1zM317 282h1v1h-1zM414 282h1v1h-1zM57 283h6v1h-6zM133 283h1v1h-1zM202 283h1v1h-1zM262 283h1v1h-1zM319 283h1v1h-1zM415 283h4v1h-4zM55 284h2v1h-2zM129 284h1v1h-1zM131 284h1v1h-1zM419 284h4v1h-4zM64 285h2v1h-2zM127 285h1v1h-1zM200 285h1v1h-1zM263 285h1v1h-1zM321 285h1v1h-1zM413 285h2v1h-2zM423 285h1v1h-1zM60 286h4v1h-4zM125 286h1v1h-1zM323 286h1v1h-1zM415 286h3v1h-3zM57 287h3v1h-3zM123 287h1v1h-1zM198 287h1v1h-1zM264 287h1v1h-1zM325 287h1v1h-1zM418 287h4v1h-4zM56 288h1v1h-1zM65 288h2v1h-2zM121 288h1v1h-1zM327 288h1v1h-1zM412 288h2v1h-2zM422 288h1v1h-1zM61 289h4v1h-4zM117 289h1v1h-1zM119 289h1v1h-1zM197 289h1v1h-1zM265 289h1v1h-1zM329 289h1v1h-1zM414 289h3v1h-3zM58 290h3v1h-3zM115 290h1v1h-1zM331 290h1v1h-1zM417 290h4v1h-4zM56 291h2v1h-2zM113 291h1v1h-1zM195 291h1v1h-1zM266 291h1v1h-1zM333 291h1v1h-1zM411 291h2v1h-2zM421 291h2v1h-2zM111 292h1v1h-1zM335 292h1v1h-1zM413 292h2v1h-2zM107 293h1v1h-1zM109 293h1v1h-1zM193 293h1v1h-1zM267 293h1v1h-1zM337 293h1v1h-1zM415 293h3v1h-3zM67 294h2v1h-2zM105 294h1v1h-1zM418 294h2v1h-2zM63 295h4v1h-4zM103 295h1v1h-1zM192 295h1v1h-1zM268 295h1v1h-1zM339 295h1v1h-1zM420 295h2v1h-2zM60 296h3v1h-3zM101 296h1v1h-1zM341 296h1v1h-1zM58 297h2v1h-2zM68 297h2v1h-2zM99 297h1v1h-1zM190 297h1v1h-1zM269 297h1v1h-1zM343 297h1v1h-1zM409 297h2v1h-2zM64 298h4v1h-4zM97 298h1v1h-1zM345 298h1v1h-1zM411 298h2v1h-2zM61 299h3v1h-3zM188 299h1v1h-1zM270 299h1v1h-1zM347 299h1v1h-1zM413 299h3v1h-3zM59 300h2v1h-2zM69 300h2v1h-2zM349 300h1v1h-1zM408 300h2v1h-2zM416 300h2v1h-2zM67 301h2v1h-2zM186 301h1v1h-1zM271 301h1v1h-1zM351 301h1v1h-1zM410 301h2v1h-2zM418 301h1v1h-1zM64 302h3v1h-3zM353 302h1v1h-1zM412 302h3v1h-3zM62 303h2v1h-2zM70 303h2v1h-2zM185 303h1v1h-1zM272 303h1v1h-1zM355 303h1v1h-1zM407 303h2v1h-2zM415 303h2v1h-2zM61 304h1v1h-1zM68 304h2v1h-2zM409 304h2v1h-2zM417 304h1v1h-1zM65 305h3v1h-3zM183 305h1v1h-1zM273 305h1v1h-1zM357 305h1v1h-1zM411 305h3v1h-3zM63 306h2v1h-2zM359 306h1v1h-1zM406 306h2v1h-2zM414 306h2v1h-2zM62 307h1v1h-1zM181 307h1v1h-1zM274 307h1v1h-1zM361 307h1v1h-1zM408 307h2v1h-2zM416 307h1v1h-1zM363 308h1v1h-1zM410 308h2v1h-2zM72 309h2v1h-2zM180 309h1v1h-1zM275 309h1v1h-1zM365 309h1v1h-1zM412 309h2v1h-2zM70 310h2v1h-2zM367 310h1v1h-1zM414 310h2v1h-2zM68 311h2v1h-2zM178 311h1v1h-1zM276 311h1v1h-1zM369 311h1v1h-1zM66 312h2v1h-2zM74 312h2v1h-2zM371 312h1v1h-1zM403 312h2v1h-2zM65 313h1v1h-1zM72 313h2v1h-2zM176 313h1v1h-1zM277 313h1v1h-1zM373 313h1v1h-1zM405 313h2v1h-2zM69 314h3v1h-3zM407 314h3v1h-3zM67 315h2v1h-2zM75 315h2v1h-2zM175 315h1v1h-1zM278 315h1v1h-1zM402 315h2v1h-2zM410 315h2v1h-2zM66 316h1v1h-1zM73 316h2v1h-2zM404 316h2v1h-2zM412 316h1v1h-1zM70 317h3v1h-3zM77 317h1v1h-1zM173 317h1v1h-1zM279 317h1v1h-1zM406 317h2v1h-2zM68 318h2v1h-2zM75 318h2v1h-2zM400 318h2v1h-2zM408 318h2v1h-2zM67 319h1v1h-1zM73 319h2v1h-2zM171 319h1v1h-1zM280 319h1v1h-1zM402 319h2v1h-2zM410 319h2v1h-2zM71 320h2v1h-2zM404 320h3v1h-3zM69 321h2v1h-2zM170 321h1v1h-1zM281 321h1v1h-1zM399 321h2v1h-2zM407 321h2v1h-2zM68 322h1v1h-1zM401 322h2v1h-2zM409 322h2v1h-2zM80 323h1v1h-1zM168 323h1v1h-1zM283 323h1v1h-1zM403 323h3v1h-3zM78 324h2v1h-2zM406 324h2v1h-2zM76 325h2v1h-2zM166 325h1v1h-1zM284 325h1v1h-1zM408 325h1v1h-1zM74 326h2v1h-2zM81 326h2v1h-2zM396 326h1v1h-1zM72 327h2v1h-2zM79 327h2v1h-2zM164 327h1v1h-1zM285 327h1v1h-1zM397 327h2v1h-2zM71 328h1v1h-1zM77 328h2v1h-2zM83 328h1v1h-1zM399 328h2v1h-2zM75 329h2v1h-2zM81 329h2v1h-2zM163 329h1v1h-1zM286 329h1v1h-1zM395 329h1v1h-1zM401 329h2v1h-2zM73 330h2v1h-2zM80 330h1v1h-1zM396 330h2v1h-2zM403 330h2v1h-2zM78 331h2v1h-2zM85 331h1v1h-1zM161 331h1v1h-1zM287 331h1v1h-1zM398 331h2v1h-2zM405 331h1v1h-1zM77 332h1v1h-1zM83 332h2v1h-2zM393 332h1v1h-1zM400 332h2v1h-2zM75 333h2v1h-2zM82 333h1v1h-1zM159 333h1v1h-1zM288 333h1v1h-1zM394 333h2v1h-2zM402 333h2v1h-2zM80 334h2v1h-2zM396 334h2v1h-2zM79 335h1v1h-1zM158 335h1v1h-1zM289 335h1v1h-1zM392 335h2v1h-2zM398 335h2v1h-2zM77 336h2v1h-2zM394 336h1v1h-1zM400 336h2v1h-2zM88 337h1v1h-1zM156 337h1v1h-1zM290 337h1v1h-1zM395 337h2v1h-2zM86 338h2v1h-2zM397 338h1v1h-1zM84 339h2v1h-2zM90 339h1v1h-1zM154 339h1v1h-1zM291 339h1v1h-1zM388 339h1v1h-1zM398 339h2v1h-2zM82 340h2v1h-2zM88 340h2v1h-2zM389 340h2v1h-2zM400 340h1v1h-1zM80 341h2v1h-2zM87 341h1v1h-1zM153 341h1v1h-1zM292 341h1v1h-1zM391 341h1v1h-1zM79 342h1v1h-1zM85 342h2v1h-2zM92 342h1v1h-1zM386 342h1v1h-1zM392 342h2v1h-2zM84 343h1v1h-1zM90 343h2v1h-2zM151 343h1v1h-1zM293 343h1v1h-1zM387 343h2v1h-2zM394 343h1v1h-1zM82 344h2v1h-2zM89 344h1v1h-1zM389 344h1v1h-1zM395 344h2v1h-2zM81 345h1v1h-1zM87 345h2v1h-2zM93 345h1v1h-1zM149 345h1v1h-1zM294 345h1v1h-1zM384 345h1v1h-1zM390 345h2v1h-2zM397 345h1v1h-1zM86 346h1v1h-1zM91 346h2v1h-2zM385 346h2v1h-2zM392 346h1v1h-1zM84 347h2v1h-2zM90 347h1v1h-1zM147 347h1v1h-1zM295 347h1v1h-1zM387 347h1v1h-1zM393 347h2v1h-2zM89 348h1v1h-1zM383 348h1v1h-1zM388 348h2v1h-2zM87 349h2v1h-2zM97 349h1v1h-1zM146 349h1v1h-1zM296 349h1v1h-1zM384 349h2v1h-2zM390 349h1v1h-1zM86 350h1v1h-1zM96 350h1v1h-1zM386 350h1v1h-1zM391 350h2v1h-2zM95 351h1v1h-1zM144 351h1v1h-1zM297 351h1v1h-1zM387 351h1v1h-1zM93 352h2v1h-2zM99 352h1v1h-1zM388 352h2v1h-2zM92 353h1v1h-1zM98 353h1v1h-1zM142 353h1v1h-1zM298 353h1v1h-1zM379 353h1v1h-1zM390 353h1v1h-1zM91 354h1v1h-1zM97 354h1v1h-1zM101 354h1v1h-1zM380 354h2v1h-2zM90 355h1v1h-1zM95 355h2v1h-2zM100 355h1v1h-1zM141 355h1v1h-1zM299 355h1v1h-1zM376 355h1v1h-1zM382 355h1v1h-1zM94 356h1v1h-1zM99 356h1v1h-1zM377 356h2v1h-2zM383 356h1v1h-1zM93 357h1v1h-1zM97 357h2v1h-2zM103 357h1v1h-1zM139 357h1v1h-1zM300 357h1v1h-1zM379 357h1v1h-1zM384 357h2v1h-2zM92 358h1v1h-1zM96 358h1v1h-1zM102 358h1v1h-1zM375 358h1v1h-1zM380 358h2v1h-2zM386 358h1v1h-1zM95 359h1v1h-1zM101 359h1v1h-1zM301 359h1v1h-1zM376 359h1v1h-1zM382 359h1v1h-1zM94 360h1v1h-1zM99 360h2v1h-2zM373 360h1v1h-1zM377 360h1v1h-1zM383 360h2v1h-2zM93 361h1v1h-1zM98 361h1v1h-1zM302 361h1v1h-1zM374 361h1v1h-1zM378 361h2v1h-2zM385 361h1v1h-1zM97 362h1v1h-1zM107 362h1v1h-1zM375 362h1v1h-1zM380 362h1v1h-1zM96 363h1v1h-1zM106 363h1v1h-1zM303 363h1v1h-1zM376 363h2v1h-2zM381 363h1v1h-1zM105 364h1v1h-1zM110 364h1v1h-1zM368 364h1v1h-1zM378 364h1v1h-1zM382 364h1v1h-1zM104 365h1v1h-1zM109 365h1v1h-1zM304 365h1v1h-1zM369 365h1v1h-1zM379 365h1v1h-1zM103 366h1v1h-1zM108 366h1v1h-1zM112 366h1v1h-1zM366 366h1v1h-1zM370 366h1v1h-1zM380 366h1v1h-1zM102 367h1v1h-1zM106 367h2v1h-2zM111 367h1v1h-1zM305 367h1v1h-1zM367 367h1v1h-1zM371 367h1v1h-1zM101 368h1v1h-1zM105 368h1v1h-1zM110 368h1v1h-1zM114 368h1v1h-1zM364 368h1v1h-1zM368 368h1v1h-1zM372 368h2v1h-2zM100 369h1v1h-1zM104 369h1v1h-1zM108 369h2v1h-2zM113 369h1v1h-1zM306 369h1v1h-1zM365 369h1v1h-1zM369 369h1v1h-1zM374 369h1v1h-1zM103 370h1v1h-1zM107 370h1v1h-1zM112 370h1v1h-1zM366 370h1v1h-1zM370 370h1v2h-1zM375 370h1v1h-1zM102 371h1v1h-1zM106 371h1v1h-1zM111 371h1v1h-1zM307 371h1v1h-1zM362 371h1v1h-1zM367 371h1v1h-1zM376 371h1v1h-1zM105 372h1v1h-1zM110 372h1v2h-1zM363 372h1v1h-1zM368 372h1v2h-1zM371 372h1v1h-1zM104 373h1v1h-1zM118 373h1v1h-1zM308 373h1v1h-1zM364 373h1v1h-1zM372 373h1v1h-1zM109 374h1v1h-1zM117 374h1v1h-1zM365 374h1v1h-1zM369 374h1v1h-1zM373 374h1v1h-1zM108 375h1v1h-1zM116 375h1v1h-1zM120 375h1v1h-1zM309 375h1v1h-1zM357 375h1v1h-1zM366 375h1v1h-1zM370 375h1v1h-1zM107 376h1v1h-1zM115 376h1v2h-1zM119 376h1v1h-1zM123 376h1v1h-1zM358 376h1v1h-1zM367 376h1v1h-1zM371 376h1v1h-1zM118 377h1v1h-1zM122 377h1v2h-1zM354 377h1v1h-1zM359 377h1v1h-1zM368 377h1v1h-1zM114 378h1v1h-1zM117 378h1v2h-1zM355 378h1v1h-1zM360 378h1v1h-1zM369 378h1v1h-1zM113 379h1v1h-1zM121 379h1v1h-1zM125 379h1v1h-1zM352 379h1v1h-1zM356 379h1v1h-1zM361 379h1v2h-1zM112 380h1v1h-1zM116 380h1v1h-1zM120 380h1v2h-1zM124 380h1v2h-1zM353 380h1v1h-1zM357 380h1v1h-1zM115 381h1v1h-1zM349 381h1v1h-1zM354 381h1v1h-1zM358 381h1v2h-1zM362 381h1v1h-1zM114 382h1v1h-1zM119 382h1v1h-1zM123 382h1v1h-1zM350 382h1v1h-1zM355 382h1v1h-1zM363 382h1v1h-1zM118 383h1v2h-1zM122 383h1v1h-1zM130 383h1v1h-1zM351 383h1v1h-1zM356 383h1v2h-1zM359 383h1v1h-1zM121 384h1v2h-1zM129 384h1v2h-1zM133 384h1v1h-1zM352 384h1v1h-1zM360 384h1v1h-1zM117 385h1v1h-1zM132 385h1v2h-1zM345 385h1v1h-1zM353 385h1v2h-1zM357 385h1v1h-1zM361 385h1v1h-1zM120 386h1v1h-1zM128 386h1v1h-1zM136 386h1v1h-1zM342 386h1v1h-1zM346 386h1v2h-1zM358 386h1v1h-1zM127 387h1v1h-1zM131 387h1v1h-1zM135 387h1v2h-1zM343 387h1v2h-1zM354 387h1v1h-1zM126 388h1v2h-1zM130 388h1v2h-1zM139 388h1v1h-1zM339 388h1v1h-1zM347 388h1v1h-1zM355 388h1v1h-1zM134 389h1v1h-1zM138 389h1v2h-1zM340 389h1v2h-1zM344 389h1v1h-1zM348 389h1v1h-1zM125 390h1v1h-1zM129 390h1v1h-1zM133 390h1v2h-1zM337 390h1v1h-1zM345 390h1v2h-1zM349 390h1v2h-1zM128 391h1v2h-1zM137 391h1v1h-1zM338 391h1v2h-1zM341 391h1v1h-1zM132 392h1v1h-1zM136 392h1v2h-1zM143 392h1v2h-1zM342 392h1v2h-1zM346 392h1v1h-1zM350 392h1v1h-1zM131 393h1v2h-1zM146 393h1v1h-1zM331 393h1v1h-1zM339 393h1v2h-1zM347 393h1v2h-1zM135 394h1v1h-1zM142 394h1v1h-1zM145 394h1v2h-1zM332 394h1v2h-1zM343 394h1v1h-1zM134 395h1v2h-1zM141 395h1v2h-1zM149 395h1v1h-1zM328 395h1v1h-1zM340 395h1v2h-1zM344 395h1v2h-1zM144 396h1v2h-1zM148 396h1v2h-1zM152 396h1v1h-1zM326 396h1v1h-1zM329 396h1v2h-1zM333 396h1v1h-1zM133 397h1v1h-1zM140 397h1v1h-1zM151 397h1v2h-1zM327 397h1v2h-1zM334 397h1v2h-1zM341 397h1v2h-1zM345 397h1v1h-1zM139 398h1v2h-1zM143 398h1v2h-1zM147 398h1v2h-1zM323 398h1v1h-1zM330 398h1v1h-1zM150 399h1v2h-1zM157 399h1v2h-1zM324 399h1v2h-1zM328 399h1v2h-1zM331 399h1v2h-1zM335 399h1v1h-1zM342 399h1v1h-1zM138 400h1v1h-1zM142 400h1v2h-1zM146 400h1v2h-1zM336 400h1v2h-1zM149 401h1v2h-1zM156 401h1v2h-1zM160 401h1v1h-1zM317 401h1v1h-1zM325 401h1v2h-1zM329 401h1v2h-1zM332 401h1v1h-1zM141 402h1v1h-1zM145 402h1v2h-1zM159 402h1v2h-1zM163 402h1v2h-1zM315 402h1v2h-1zM318 402h1v2h-1zM333 402h1v2h-1zM148 403h1v2h-1zM155 403h1v3h-1zM166 403h1v2h-1zM312 403h1v2h-1zM326 403h1v2h-1zM330 403h1v2h-1zM158 404h1v3h-1zM162 404h1v2h-1zM316 404h1v2h-1zM319 404h1v2h-1zM147 405h1v1h-1zM165 405h1v2h-1zM309 405h1v2h-1zM313 405h1v2h-1zM327 405h1v2h-1zM331 405h1v1h-1zM154 406h1v2h-1zM161 406h1v2h-1zM172 406h1v2h-1zM317 406h1v3h-1zM320 406h1v2h-1zM157 407h1v2h-1zM164 407h1v3h-1zM175 407h1v2h-1zM303 407h1v2h-1zM310 407h1v2h-1zM314 407h1v3h-1zM328 407h1v1h-1zM153 408h1v2h-1zM160 408h1v2h-1zM171 408h1v2h-1zM178 408h1v2h-1zM300 408h1v2h-1zM321 408h1v2h-1zM156 409h1v2h-1zM174 409h1v2h-1zM181 409h1v2h-1zM297 409h1v2h-1zM304 409h1v2h-1zM311 409h1v2h-1zM318 409h1v2h-1zM159 410h1v2h-1zM163 410h1v2h-1zM170 410h1v2h-1zM177 410h1v2h-1zM294 410h1v2h-1zM301 410h1v2h-1zM315 410h1v2h-1zM322 410h1v1h-1zM173 411h1v3h-1zM180 411h1v2h-1zM187 411h1v2h-1zM298 411h1v3h-1zM305 411h1v3h-1zM312 411h1v2h-1zM319 411h1v1h-1zM162 412h1v1h-1zM169 412h1v2h-1zM176 412h1v3h-1zM190 412h1v2h-1zM288 412h1v2h-1zM295 412h1v3h-1zM302 412h1v3h-1zM316 412h1v1h-1zM179 413h1v3h-1zM186 413h1v2h-1zM193 413h1v2h-1zM285 413h1v2h-1zM313 413h1v1h-1zM168 414h1v2h-1zM172 414h1v2h-1zM189 414h1v3h-1zM196 414h1v1h-1zM279 414h1v3h-1zM282 414h1v2h-1zM289 414h1v3h-1zM299 414h1v4h-1zM306 414h1v2h-1zM175 415h1v2h-1zM185 415h1v3h-1zM192 415h1v3h-1zM195 415h1v4h-1zM202 415h1v3h-1zM286 415h1v3h-1zM296 415h1v4h-1zM303 415h1v2h-1zM171 416h1v1h-1zM178 416h1v2h-1zM205 416h1v2h-1zM208 416h1v3h-1zM270 416h1v6h-1zM273 416h1v3h-1zM283 416h1v6h-1zM307 416h1v1h-1zM174 417h1v1h-1zM188 417h1v4h-1zM211 417h1v3h-1zM217 417h1v6h-1zM263 417h1v3h-1zM267 417h1v5h-1zM280 417h1v6h-1zM290 417h1v4h-1zM304 417h1v1h-1zM177 418h1v2h-1zM184 418h1v2h-1zM191 418h1v4h-1zM201 418h1v5h-1zM204 418h1v6h-1zM220 418h1v5h-1zM254 418h1v6h-1zM257 418h1v5h-1zM287 418h1v4h-1zM300 418h1v2h-1zM194 419h1v4h-1zM207 419h1v6h-1zM224 419h1v5h-1zM227 419h1v5h-1zM233 419h1v11h-1zM236 419h1v11h-1zM239 419h1v11h-1zM241 419h1v5h-1zM248 419h1v11h-1zM251 419h1v5h-1zM274 419h1v5h-1zM297 419h1v2h-1zM183 420h1v2h-1zM210 420h1v5h-1zM264 420h1v6h-1zM187 421h1v2h-1zM291 421h1v2h-1zM190 422h1v2h-1zM268 422h1v6h-1zM271 422h1v5h-1zM284 422h1v2h-1zM288 422h1v1h-1zM193 423h1v1h-1zM200 423h1v3h-1zM216 423h1v6h-1zM219 423h1v6h-1zM258 423h1v6h-1zM281 423h1v2h-1zM203 424h1v3h-1zM223 424h1v6h-1zM226 424h1v6h-1zM242 424h1v6h-1zM252 424h1v6h-1zM255 424h1v6h-1zM275 424h1v2h-1zM206 425h1v2h-1zM209 425h1v2h-1zM265 426h1v2h-1z"/>
<path fill="#ff0000" d="M347 55h3v1h-3zM357 55h3v1h-3zM346 56h1v1h-1zM350 56h1v1h-1zM356 56h1v1h-1zM360 56h1v1h-1zM345 57h1v3h-1zM351 57h1v3h-1zM355 57h1v3h-1zM361 57h1v3h-1zM346 60h1v1h-1zM352 60h1v4h-1zM354 60h1v4h-1zM360 60h1v1h-1zM347 61h1v1h-1zM359 61h1v1h-1zM353 64h1v8h-1zM377 76h3v1h-3zM378 77h2v1h-2zM377 78h1v1h-1zM379 78h1v1h-1zM373 79h2v1h-2zM376 79h1v1h-1zM372 80h1v1h-1zM375 80h1v1h-1zM371 81h1v2h-1zM376 81h1v2h-1zM372 83h1v1h-1zM375 83h1v1h-1zM373 84h2v1h-2zM331 93h1v1h-1zM325 94h2v1h-2zM330 94h1v6h-1zM327 95h1v2h-1zM326 97h1v2h-1zM325 99h1v1h-1zM325 100h8v1h-8zM330 101h1v1h-1zM220 126h1v1h-1zM221 127h1v1h-1zM223 128h1v1h-1zM224 129h1v1h-1zM225 130h2v1h-2zM227 131h1v1h-1zM228 132h2v1h-2zM230 133h1v1h-1zM231 134h1v1h-1zM232 135h2v1h-2zM234 136h1v1h-1zM627 136h3v1h-3zM235 137h1v1h-1zM626 137h1v1h-1zM630 137h1v1h-1zM236 138h2v1h-2zM625 138h1v3h-1zM631 138h1v3h-1zM238 139h1v1h-1zM239 140h2v1h-2zM241 141h1v1h-1zM626 141h1v2h-1zM630 141h1v2h-1zM242 142h1v1h-1zM624 142h1v1h-1zM243 143h2v1h-2zM625 143h1v1h-1zM631 143h1v1h-1zM245 144h1v1h-1zM632 144h1v1h-1zM246 145h2v1h-2zM248 146h1v1h-1zM249 147h1v1h-1zM250 148h2v1h-2zM252 149h1v1h-1zM253 150h2v1h-2zM255 151h1v1h-1zM256 152h1v1h-1zM257 153h2v1h-2zM259 154h1v1h-1zM260 155h1v1h-1zM261 156h2v1h-2zM122 157h1v1h-1zM263 157h1v1h-1zM112 158h2v1h-2zM121 158h1v12h-1zM264 158h2v1h-2zM114 159h1v1h-1zM266 159h1v1h-1zM115 160h1v3h-1zM267 160h1v1h-1zM268 161h2v1h-2zM270 162h1v1h-1zM114 163h1v2h-1zM271 163h2v1h-2zM273 164h1v1h-1zM113 165h1v2h-1zM274 165h1v1h-1zM275 166h2v1h-2zM112 167h1v2h-1zM277 167h1v1h-1zM278 168h2v1h-2zM111 169h1v1h-1zM280 169h1v1h-1zM111 170h15v1h-15zM281 170h1v1h-1zM121 171h1v2h-1zM282 171h2v1h-2zM284 172h1v1h-1zM138 173h1v1h-1zM285 173h1v1h-1zM137 174h3v1h-3zM286 174h2v1h-2zM138 175h1v1h-1zM288 175h1v1h-1zM289 176h2v1h-2zM630 176h3v1h-3zM291 177h1v1h-1zM631 177h2v1h-2zM292 178h1v1h-1zM630 178h1v1h-1zM632 178h1v1h-1zM293 179h2v1h-2zM625 179h1v1h-1zM629 179h1v1h-1zM295 180h1v1h-1zM626 180h1v1h-1zM628 180h1v1h-1zM296 181h2v1h-2zM372 181h5v1h-5zM627 181h1v1h-1zM298 182h1v1h-1zM370 182h2v1h-2zM377 182h2v1h-2zM626 182h1v1h-1zM628 182h1v1h-1zM299 183h1v1h-1zM369 183h1v1h-1zM379 183h1v1h-1zM625 183h1v1h-1zM629 183h1v1h-1zM300 184h2v1h-2zM368 184h1v1h-1zM380 184h1v1h-1zM624 184h1v1h-1zM302 185h1v1h-1zM367 185h1v2h-1zM381 185h1v2h-1zM303 186h2v1h-2zM305 187h1v1h-1zM366 187h1v5h-1zM382 187h1v5h-1zM306 188h1v1h-1zM307 189h2v1h-2zM374 189h1v1h-1zM309 190h1v1h-1zM310 191h2v1h-2zM312 192h1v1h-1zM367 192h1v2h-1zM381 192h1v2h-1zM313 193h1v1h-1zM314 194h1v1h-1zM368 194h1v1h-1zM380 194h1v1h-1zM316 195h1v1h-1zM369 195h1v1h-1zM379 195h1v1h-1zM317 196h1v1h-1zM370 196h2v1h-2zM377 196h2v1h-2zM32 197h3v1h-3zM318 197h2v1h-2zM351 197h1v1h-1zM372 197h5v1h-5zM30 198h2v1h-2zM35 198h2v1h-2zM320 198h1v1h-1zM350 198h3v1h-3zM30 199h1v1h-1zM36 199h1v1h-1zM321 199h2v1h-2zM351 199h1v1h-1zM29 200h1v3h-1zM37 200h1v3h-1zM323 200h1v1h-1zM33 201h1v1h-1zM324 201h1v1h-1zM325 202h2v1h-2zM30 203h1v1h-1zM36 203h1v1h-1zM327 203h1v1h-1zM30 204h2v1h-2zM35 204h2v1h-2zM328 204h2v1h-2zM32 205h3v1h-3zM330 205h1v1h-1zM331 206h1v1h-1zM332 207h2v1h-2zM334 208h1v1h-1zM335 209h2v1h-2zM384 209h6v1h-6zM337 210h1v1h-1zM388 210h2v1h-2zM338 211h1v1h-1zM387 211h1v1h-1zM389 211h1v4h-1zM339 212h2v1h-2zM386 212h1v1h-1zM341 213h1v1h-1zM385 213h1v1h-1zM342 214h1v1h-1zM384 214h1v1h-1zM343 215h2v1h-2zM376 215h5v1h-5zM383 215h1v1h-1zM345 216h1v1h-1zM375 216h1v1h-1zM381 216h2v1h-2zM625 216h2v1h-2zM630 216h2v1h-2zM346 217h2v1h-2zM374 217h1v1h-1zM382 217h1v1h-1zM624 217h1v2h-1zM627 217h1v3h-1zM629 217h1v3h-1zM632 217h1v2h-1zM348 218h1v1h-1zM373 218h1v5h-1zM383 218h1v5h-1zM349 219h1v1h-1zM357 219h1v1h-1zM625 219h1v1h-1zM631 219h1v1h-1zM27 220h5v1h-5zM350 220h2v1h-2zM356 220h3v1h-3zM628 220h1v5h-1zM26 221h1v1h-1zM32 221h1v1h-1zM352 221h1v1h-1zM357 221h1v1h-1zM25 222h1v1h-1zM33 222h1v1h-1zM24 223h1v1h-1zM34 223h1v1h-1zM374 223h1v1h-1zM382 223h1v1h-1zM23 224h1v5h-1zM35 224h1v5h-1zM375 224h1v1h-1zM381 224h1v1h-1zM376 225h5v1h-5zM24 229h1v1h-1zM34 229h1v1h-1zM25 230h1v3h-1zM33 230h1v3h-1zM21 232h1v1h-1zM22 233h1v1h-1zM24 233h1v1h-1zM34 233h1v1h-1zM23 234h1v1h-1zM35 234h1v1h-1zM36 235h1v1h-1zM37 236h1v1h-1zM74 251h3v1h-3zM75 252h2v1h-2zM74 253h1v1h-1zM76 253h1v1h-1zM70 254h2v1h-2zM73 254h1v1h-1zM69 255h1v1h-1zM72 255h1v1h-1zM68 256h1v2h-1zM73 256h1v2h-1zM69 258h1v1h-1zM72 258h1v1h-1zM70 259h2v1h-2zM627 266h3v1h-3zM625 267h2v1h-2zM630 267h2v1h-2zM625 268h1v1h-1zM631 268h1v1h-1zM624 269h1v3h-1zM632 269h1v3h-1zM628 270h1v1h-1zM625 272h1v1h-1zM631 272h1v1h-1zM625 273h2v1h-2zM630 273h2v1h-2zM627 274h3v1h-3zM630 306h3v1h-3zM631 307h2v1h-2zM630 308h1v1h-1zM632 308h1v1h-1zM626 309h2v1h-2zM629 309h1v1h-1zM625 310h1v1h-1zM628 310h1v1h-1zM624 311h1v2h-1zM629 311h1v2h-1zM625 313h1v1h-1zM628 313h1v1h-1zM626 314h2v1h-2zM631 316h1v1h-1zM625 317h2v1h-2zM630 317h1v6h-1zM627 318h1v2h-1zM626 320h1v2h-1zM625 322h1v1h-1zM625 323h8v1h-8zM630 324h1v1h-1zM336 371h3v1h-3zM334 372h2v1h-2zM339 372h2v1h-2zM334 373h1v1h-1zM340 373h1v1h-1zM333 374h1v3h-1zM341 374h1v3h-1zM337 375h1v1h-1zM334 377h1v1h-1zM340 377h1v1h-1zM334 378h2v1h-2zM339 378h2v1h-2zM336 379h3v1h-3zM338 418h5v1h-5zM341 419h2v1h-2zM340 420h1v1h-1zM342 420h1v3h-1zM339 421h1v1h-1zM338 422h1v1h-1zM337 423h1v1h-1zM328 424h1v1h-1zM336 424h1v1h-1zM329 425h1v1h-1zM335 425h1v1h-1zM330 426h1v1h-1zM334 426h1v1h-1zM331 427h1v1h-1zM333 427h1v1h-1zM332 428h1v1h-1zM331 429h1v1h-1zM333 429h1v1h-1zM330 430h1v1h-1zM334 430h1v1h-1zM329 431h1v1h-1zM335 431h1v1h-1zM328 432h1v1h-1zM336 432h1v1h-1zM311 433h1v1h-1zM327 433h1v1h-1zM305 434h2v1h-2zM310 434h1v6h-1zM326 434h1v1h-1zM307 435h1v2h-1zM306 437h1v2h-1zM305 439h1v1h-1zM305 440h8v1h-8zM310 441h1v1h-1z"/>
<path fill="#00ff00" d="M168 37h1v1h-1zM172 37h1v1h-1zM169 38h3v1h-3zM168 39h1v3h-1zM172 39h1v3h-1zM169 42h3v1h-3zM170 43h1v1h-1zM138 44h1v1h-1zM152 44h1v1h-1zM168 44h5v1h-5zM139 45h1v1h-1zM151 45h1v1h-1zM170 45h1v1h-1zM140 46h11v1h-11zM142 47h1v11h-1zM148 47h1v11h-1zM140 58h11v1h-11zM139 59h1v1h-1zM151 59h1v1h-1zM138 60h1v1h-1zM152 60h1v1h-1zM209 89h1v1h-1zM221 89h1v1h-1zM210 90h1v1h-1zM220 90h1v1h-1zM211 91h1v4h-1zM219 91h1v4h-1zM215 93h1v2h-1zM211 95h9v1h-9zM211 96h1v2h-1zM215 96h1v5h-1zM219 96h1v2h-1zM210 98h1v1h-1zM220 98h1v1h-1zM138 99h1v1h-1zM144 99h1v1h-1zM209 99h1v1h-1zM221 99h1v1h-1zM139 100h1v2h-1zM143 100h1v2h-1zM141 101h1v1h-1zM214 101h3v1h-3zM139 102h5v1h-5zM213 102h1v3h-1zM217 102h1v3h-1zM139 103h1v1h-1zM141 103h1v2h-1zM143 103h1v1h-1zM138 104h1v1h-1zM144 104h1v1h-1zM140 105h3v1h-3zM214 105h3v1h-3zM140 106h1v1h-1zM142 106h1v1h-1zM141 107h1v1h-1zM219 120h1v1h-1zM218 121h3v1h-3zM219 122h1v1h-1zM224 130h1v1h-1zM227 134h1v1h-1zM231 138h1v1h-1zM235 142h1v1h-1zM239 146h1v1h-1zM351 147h1v1h-1zM359 147h1v1h-1zM352 148h1v1h-1zM358 148h1v1h-1zM353 149h5v1h-5zM242 150h1v1h-1zM352 150h1v1h-1zM358 150h1v1h-1zM351 151h1v5h-1zM359 151h1v5h-1zM246 154h1v1h-1zM352 156h1v1h-1zM358 156h1v1h-1zM353 157h5v1h-5zM250 158h1v1h-1zM355 158h1v3h-1zM627 158h3v1h-3zM626 159h1v2h-1zM630 159h1v2h-1zM351 161h9v1h-9zM624 161h4v1h-4zM629 161h4v1h-4zM254 162h1v1h-1zM355 162h1v2h-1zM624 163h9v1h-9zM257 166h1v1h-1zM147 170h1v1h-1zM149 170h1v1h-1zM261 170h1v1h-1zM338 170h1v1h-1zM151 171h1v1h-1zM153 171h1v1h-1zM155 171h1v1h-1zM157 171h1v1h-1zM337 171h3v1h-3zM159 172h1v1h-1zM161 172h1v1h-1zM163 172h1v1h-1zM338 172h1v1h-1zM165 173h1v1h-1zM167 173h1v1h-1zM169 173h1v1h-1zM171 173h1v1h-1zM173 174h1v1h-1zM175 174h1v1h-1zM177 174h1v1h-1zM265 174h1v1h-1zM179 175h1v1h-1zM181 175h1v1h-1zM183 175h1v1h-1zM185 176h1v1h-1zM187 176h1v1h-1zM189 176h1v1h-1zM191 176h1v1h-1zM143 177h2v1h-2zM148 177h1v1h-1zM152 177h1v1h-1zM156 177h1v1h-1zM160 177h1v1h-1zM164 177h1v1h-1zM168 177h1v1h-1zM172 177h1v1h-1zM176 177h1v1h-1zM180 177h1v1h-1zM184 177h1v1h-1zM188 177h1v1h-1zM192 177h2v1h-2zM195 177h3v1h-3zM200 177h1v1h-1zM204 177h1v1h-1zM208 177h1v1h-1zM212 177h1v1h-1zM216 177h1v1h-1zM220 177h1v1h-1zM224 177h1v1h-1zM228 177h1v1h-1zM232 177h1v1h-1zM236 177h1v1h-1zM240 177h1v1h-1zM244 177h1v1h-1zM248 177h1v1h-1zM252 177h1v1h-1zM256 177h1v1h-1zM260 177h1v1h-1zM264 177h1v1h-1zM268 177h1v1h-1zM272 177h1v1h-1zM276 177h1v1h-1zM280 177h1v1h-1zM284 177h1v1h-1zM288 177h1v1h-1zM292 177h1v1h-1zM296 177h1v1h-1zM300 177h1v1h-1zM304 177h1v1h-1zM308 177h1v1h-1zM312 177h1v1h-1zM316 177h1v1h-1zM320 177h1v1h-1zM324 177h1v1h-1zM328 177h1v1h-1zM332 177h1v1h-1zM336 177h1v1h-1zM147 178h1v1h-1zM151 178h1v1h-1zM155 178h1v1h-1zM199 178h1v1h-1zM201 178h1v1h-1zM203 178h1v1h-1zM205 178h1v1h-1zM269 178h1v1h-1zM159 179h1v1h-1zM163 179h1v1h-1zM207 179h1v1h-1zM209 179h1v1h-1zM211 179h1v1h-1zM167 180h1v1h-1zM171 180h1v1h-1zM213 180h1v1h-1zM215 180h1v1h-1zM217 180h1v1h-1zM219 180h1v1h-1zM175 181h1v1h-1zM179 181h1v1h-1zM183 181h1v1h-1zM221 181h1v1h-1zM223 181h1v1h-1zM225 181h1v1h-1zM187 182h1v1h-1zM191 182h1v1h-1zM227 182h1v1h-1zM229 182h1v1h-1zM231 182h1v1h-1zM233 182h1v1h-1zM272 182h1v1h-1zM195 183h1v1h-1zM199 183h1v1h-1zM235 183h1v1h-1zM237 183h1v1h-1zM239 183h1v1h-1zM203 184h1v1h-1zM207 184h1v1h-1zM211 184h1v1h-1zM241 184h1v1h-1zM243 184h1v1h-1zM245 184h1v1h-1zM215 185h1v1h-1zM219 185h1v1h-1zM247 185h1v1h-1zM249 185h1v1h-1zM251 185h1v1h-1zM253 185h1v1h-1zM223 186h1v1h-1zM227 186h1v1h-1zM255 186h1v1h-1zM257 186h1v1h-1zM259 186h1v1h-1zM276 186h1v1h-1zM231 187h1v1h-1zM235 187h1v1h-1zM239 187h1v1h-1zM261 187h1v1h-1zM263 187h1v1h-1zM265 187h1v1h-1zM267 187h1v1h-1zM243 188h1v1h-1zM247 188h1v1h-1zM269 188h1v1h-1zM271 188h1v1h-1zM273 188h1v1h-1zM251 189h1v1h-1zM255 189h1v1h-1zM275 189h1v1h-1zM277 189h1v1h-1zM279 189h1v1h-1zM281 189h1v1h-1zM259 190h1v1h-1zM263 190h1v1h-1zM267 190h1v1h-1zM280 190h1v1h-1zM283 190h1v1h-1zM285 190h1v1h-1zM287 190h1v1h-1zM271 191h1v1h-1zM275 191h1v1h-1zM289 191h1v1h-1zM291 191h1v1h-1zM293 191h1v1h-1zM295 191h1v1h-1zM279 192h1v1h-1zM283 192h1v1h-1zM297 192h1v1h-1zM299 192h1v1h-1zM301 192h1v1h-1zM287 193h1v1h-1zM291 193h1v1h-1zM295 193h1v1h-1zM303 193h1v2h-1zM305 193h1v1h-1zM307 193h1v1h-1zM309 193h1v1h-1zM284 194h1v1h-1zM299 194h1v1h-1zM311 194h1v2h-1zM313 194h1v1h-1zM315 194h1v1h-1zM307 195h1v1h-1zM317 195h1v1h-1zM319 195h1v2h-1zM321 195h1v1h-1zM315 196h1v1h-1zM323 196h1v1h-1zM325 196h1v1h-1zM327 196h1v2h-1zM329 196h1v1h-1zM626 196h1v1h-1zM629 196h1v1h-1zM632 196h1v1h-1zM331 197h1v1h-1zM333 197h1v1h-1zM335 197h1v2h-1zM625 197h2v1h-2zM628 197h2v1h-2zM631 197h1v1h-1zM287 198h1v1h-1zM337 198h1v1h-1zM339 198h1v1h-1zM341 198h1v1h-1zM343 198h1v2h-1zM625 198h1v1h-1zM627 198h2v1h-2zM630 198h2v1h-2zM345 199h1v1h-1zM347 199h1v1h-1zM624 199h1v1h-1zM627 199h1v1h-1zM630 199h1v1h-1zM626 201h1v1h-1zM629 201h1v1h-1zM632 201h1v1h-1zM291 202h1v1h-1zM625 202h2v1h-2zM628 202h2v1h-2zM631 202h1v1h-1zM625 203h1v1h-1zM627 203h2v1h-2zM630 203h2v1h-2zM624 204h1v1h-1zM627 204h1v1h-1zM630 204h1v1h-1zM295 206h1v1h-1zM299 210h1v1h-1zM302 214h1v1h-1zM306 218h1v1h-1zM310 222h1v1h-1zM314 226h1v1h-1zM317 230h1v1h-1zM321 234h1v1h-1zM625 236h1v1h-1zM632 236h1v1h-1zM626 237h6v1h-6zM325 238h1v1h-1zM627 238h1v5h-1zM630 238h1v5h-1zM329 242h1v1h-1zM445 242h1v1h-1zM451 242h1v1h-1zM457 242h1v1h-1zM444 243h2v1h-2zM450 243h2v1h-2zM456 243h1v2h-1zM626 243h6v1h-6zM444 244h1v1h-1zM446 244h1v3h-1zM450 244h1v1h-1zM452 244h1v3h-1zM625 244h1v1h-1zM632 244h1v1h-1zM443 245h1v1h-1zM449 245h1v1h-1zM455 245h1v1h-1zM332 246h1v1h-1zM442 246h1v2h-1zM448 246h1v1h-1zM454 246h1v1h-1zM447 247h2v1h-2zM453 247h2v1h-2zM441 248h1v1h-1zM447 248h1v1h-1zM453 248h1v1h-1zM336 250h1v1h-1zM445 252h1v1h-1zM451 252h1v1h-1zM457 252h1v1h-1zM444 253h2v1h-2zM450 253h2v1h-2zM456 253h1v2h-1zM340 254h1v1h-1zM444 254h1v1h-1zM446 254h1v3h-1zM450 254h1v1h-1zM452 254h1v3h-1zM443 255h1v1h-1zM449 255h1v1h-1zM455 255h1v1h-1zM442 256h1v2h-1zM448 256h1v1h-1zM454 256h1v1h-1zM447 257h2v1h-2zM453 257h2v1h-2zM344 258h1v1h-1zM441 258h1v1h-1zM447 258h1v1h-1zM453 258h1v1h-1zM347 262h1v1h-1zM442 273h1v1h-1zM448 273h1v1h-1zM443 274h1v2h-1zM447 274h1v2h-1zM445 275h1v1h-1zM443 276h5v1h-5zM443 277h1v1h-1zM445 277h1v2h-1zM447 277h1v1h-1zM442 278h1v1h-1zM448 278h1v1h-1zM444 279h3v1h-3zM444 280h1v1h-1zM446 280h1v1h-1zM445 281h1v1h-1zM626 286h1v1h-1zM630 286h1v1h-1zM627 287h3v1h-3zM626 288h1v3h-1zM630 288h1v3h-1zM627 291h3v1h-3zM628 292h1v1h-1zM626 293h5v1h-5zM628 294h1v1h-1zM393 297h1v1h-1zM397 297h1v1h-1zM394 298h3v1h-3zM393 299h1v3h-1zM397 299h1v3h-1zM394 302h3v1h-3zM395 303h1v1h-1zM39 304h1v1h-1zM43 304h1v1h-1zM393 304h5v1h-5zM40 305h3v1h-3zM395 305h1v1h-1zM39 306h1v3h-1zM43 306h1v3h-1zM40 309h3v1h-3zM41 310h1v1h-1zM39 311h5v1h-5zM41 312h1v1h-1zM625 336h1v1h-1zM631 336h1v1h-1zM626 337h1v2h-1zM630 337h1v2h-1zM628 338h1v1h-1zM626 339h5v1h-5zM626 340h1v1h-1zM628 340h1v2h-1zM630 340h1v1h-1zM625 341h1v1h-1zM631 341h1v1h-1zM627 342h3v1h-3zM627 343h1v1h-1zM629 343h1v1h-1zM628 344h1v1h-1zM148 377h1v1h-1zM152 377h1v1h-1zM149 378h3v1h-3zM148 379h1v3h-1zM152 379h1v3h-1zM149 382h3v1h-3zM150 383h1v1h-1zM148 384h5v1h-5zM150 385h1v1h-1zM123 411h5v1h-5zM122 412h1v1h-1zM128 412h1v1h-1zM121 413h1v3h-1zM129 413h1v3h-1zM122 416h1v1h-1zM128 416h1v1h-1zM117 417h7v1h-7zM127 417h7v1h-7zM117 421h17v1h-17z"/>
<path fill="#ffff00" d="M244 21h1v1h-1zM256 21h1v1h-1zM245 22h1v2h-1zM255 22h1v2h-1zM246 24h2v1h-2zM253 24h2v1h-2zM248 25h5v1h-5zM246 26h2v1h-2zM253 26h2v1h-2zM245 27h1v2h-1zM255 27h1v2h-1zM244 29h1v5h-1zM256 29h1v5h-1zM276 29h3v1h-3zM275 30h1v3h-1zM279 30h1v3h-1zM276 33h3v1h-3zM245 34h1v2h-1zM255 34h1v2h-1zM277 34h1v1h-1zM275 35h5v1h-5zM246 36h2v1h-2zM253 36h2v1h-2zM277 36h1v2h-1zM248 37h5v1h-5zM235 67h1v1h-1zM233 68h5v1h-5zM235 69h1v2h-1zM237 70h2v1h-2zM235 71h2v1h-2zM239 71h1v2h-1zM235 72h1v3h-1zM238 73h1v2h-1zM239 75h1v1h-1zM327 120h1v2h-1zM323 122h9v1h-9zM327 123h1v5h-1zM331 126h3v1h-3zM330 127h1v1h-1zM334 127h1v1h-1zM327 128h3v1h-3zM335 128h1v3h-1zM327 129h1v6h-1zM334 131h1v1h-1zM333 132h1v3h-1zM334 135h1v1h-1zM335 136h1v1h-1zM624 146h1v1h-1zM626 146h1v1h-1zM628 146h1v1h-1zM625 147h1v7h-1zM627 147h1v7h-1zM629 147h1v1h-1zM631 147h1v1h-1zM629 148h3v1h-3zM629 149h1v4h-1zM631 149h1v4h-1zM630 153h1v1h-1zM629 154h1v1h-1zM631 154h1v1h-1zM326 156h1v1h-1zM325 157h3v1h-3zM326 158h1v1h-1zM323 161h1v1h-1zM364 163h5v1h-5zM363 164h1v1h-1zM369 164h1v1h-1zM362 165h1v5h-1zM370 165h1v5h-1zM363 170h1v1h-1zM369 170h1v1h-1zM364 171h5v1h-5zM366 172h1v3h-1zM145 173h1v1h-1zM334 174h1v1h-1zM340 174h1v1h-1zM339 175h3v1h-3zM362 175h9v1h-9zM143 176h1v1h-1zM335 176h1v1h-1zM340 176h1v1h-1zM366 176h1v4h-1zM625 186h1v1h-1zM628 186h1v1h-1zM630 186h2v1h-2zM624 187h2v1h-2zM628 187h2v1h-2zM632 187h1v2h-1zM625 188h1v3h-1zM627 188h1v3h-1zM629 188h1v1h-1zM630 189h2v1h-2zM631 190h1v1h-1zM626 191h1v3h-1zM632 191h1v3h-1zM631 194h1v1h-1zM405 219h3v1h-3zM404 220h1v3h-1zM408 220h1v3h-1zM405 223h3v1h-3zM406 224h1v1h-1zM404 225h5v1h-5zM406 226h1v2h-1zM625 226h1v1h-1zM631 226h1v1h-1zM626 227h1v1h-1zM630 227h1v1h-1zM627 228h3v1h-3zM626 229h1v1h-1zM630 229h1v1h-1zM625 230h1v3h-1zM631 230h1v3h-1zM626 233h1v1h-1zM630 233h1v1h-1zM627 234h3v1h-3zM627 296h3v1h-3zM626 297h1v3h-1zM630 297h1v3h-1zM627 300h3v1h-3zM628 301h1v1h-1zM626 302h5v1h-5zM628 303h1v2h-1zM92 317h3v1h-3zM91 318h1v3h-1zM95 318h1v3h-1zM92 321h3v1h-3zM93 322h1v1h-1zM91 323h5v1h-5zM93 324h1v2h-1zM44 326h1v1h-1zM48 326h1v1h-1zM52 326h1v1h-1zM627 326h1v1h-1zM45 327h1v1h-1zM47 327h1v1h-1zM49 327h1v1h-1zM51 327h1v1h-1zM53 327h1v1h-1zM625 327h5v1h-5zM46 328h1v13h-1zM50 328h1v13h-1zM54 328h1v3h-1zM58 328h1v1h-1zM627 328h1v2h-1zM57 329h2v1h-2zM629 329h2v1h-2zM56 330h1v1h-1zM58 330h1v9h-1zM627 330h2v1h-2zM631 330h1v2h-1zM54 331h2v1h-2zM627 331h1v3h-1zM54 332h1v7h-1zM630 332h1v2h-1zM631 334h1v1h-1zM55 339h1v1h-1zM57 339h1v1h-1zM56 340h1v1h-1zM55 341h1v1h-1zM57 341h1v1h-1zM54 342h1v1h-1zM58 342h1v1h-1zM409 345h1v1h-1zM415 345h1v1h-1zM419 345h3v1h-3zM408 346h2v1h-2zM415 346h2v1h-2zM418 346h1v1h-1zM422 346h1v1h-1zM407 347h1v1h-1zM409 347h1v7h-1zM415 347h1v1h-1zM417 347h1v1h-1zM423 347h1v3h-1zM414 348h1v1h-1zM416 348h1v1h-1zM413 349h1v5h-1zM417 349h1v1h-1zM418 350h1v1h-1zM422 350h1v1h-1zM419 351h3v1h-3zM420 352h1v1h-1zM421 353h1v1h-1zM410 354h1v1h-1zM412 354h1v1h-1zM422 354h1v1h-1zM411 355h1v5h-1zM423 355h1v5h-1zM422 360h1v1h-1zM421 361h1v1h-1zM397 371h1v1h-1zM395 372h5v1h-5zM397 373h1v2h-1zM399 374h2v1h-2zM397 375h2v1h-2zM401 375h1v2h-1zM397 376h1v3h-1zM400 377h1v2h-1zM401 379h1v1h-1zM102 394h3v1h-3zM101 395h1v3h-1zM105 395h1v3h-1zM102 398h3v1h-3zM103 399h1v1h-1zM101 400h5v1h-5zM103 401h1v2h-1z"/>
<path fill="#0000ff" d="M78 99h3v1h-3zM77 100h1v1h-1zM81 100h2v1h-2zM78 101h1v1h-1zM82 101h1v1h-1zM79 102h1v3h-1zM83 102h1v3h-1zM78 105h1v1h-1zM82 105h1v1h-1zM77 106h1v1h-1zM81 106h2v1h-2zM78 107h3v1h-3zM61 118h5v1h-5zM58 119h3v1h-3zM66 119h1v1h-1zM57 120h1v1h-1zM67 120h3v1h-3zM56 121h1v1h-1zM66 121h1v1h-1zM70 121h1v1h-1zM55 122h1v1h-1zM65 122h1v3h-1zM71 122h1v3h-1zM57 124h3v1h-3zM56 125h1v1h-1zM60 125h1v1h-1zM66 125h1v1h-1zM70 125h1v1h-1zM55 126h1v3h-1zM61 126h1v3h-1zM67 126h3v1h-3zM71 128h1v1h-1zM56 129h1v1h-1zM60 129h1v1h-1zM70 129h1v1h-1zM57 130h3v1h-3zM69 130h1v1h-1zM60 131h1v1h-1zM66 131h3v1h-3zM61 132h5v1h-5zM337 132h1v2h-1zM343 132h1v2h-1zM349 132h1v2h-1zM336 134h3v1h-3zM341 134h5v1h-5zM348 134h3v1h-3zM337 135h1v2h-1zM343 135h1v5h-1zM349 135h1v2h-1zM418 136h1v1h-1zM434 136h1v1h-1zM338 137h1v2h-1zM348 137h1v2h-1zM419 137h1v1h-1zM433 137h1v1h-1zM420 138h1v1h-1zM432 138h1v1h-1zM339 139h2v1h-2zM346 139h2v1h-2zM421 139h1v2h-1zM431 139h1v2h-1zM341 140h5v1h-5zM124 141h5v1h-5zM343 141h1v3h-1zM422 141h1v3h-1zM430 141h1v3h-1zM123 142h1v1h-1zM129 142h2v1h-2zM122 143h1v1h-1zM131 143h1v1h-1zM123 144h1v1h-1zM132 144h1v1h-1zM339 144h9v1h-9zM418 144h17v1h-17zM124 145h1v1h-1zM133 145h1v2h-1zM343 145h1v4h-1zM422 145h1v3h-1zM430 145h1v3h-1zM125 146h1v2h-1zM134 147h1v5h-1zM126 148h1v3h-1zM421 148h1v2h-1zM431 148h1v2h-1zM420 150h1v1h-1zM432 150h1v1h-1zM125 151h1v2h-1zM419 151h1v1h-1zM433 151h1v1h-1zM133 152h1v2h-1zM418 152h1v1h-1zM434 152h1v1h-1zM124 153h1v1h-1zM382 153h1v3h-1zM385 153h1v1h-1zM388 153h1v3h-1zM123 154h1v1h-1zM132 154h1v1h-1zM384 154h1v1h-1zM386 154h1v1h-1zM122 155h1v1h-1zM131 155h1v1h-1zM385 155h1v1h-1zM123 156h1v1h-1zM129 156h2v1h-2zM383 156h1v1h-1zM387 156h1v1h-1zM124 157h5v1h-5zM384 157h3v1h-3zM327 158h2v1h-2zM385 158h1v1h-1zM327 159h1v1h-1zM383 159h5v1h-5zM385 160h1v2h-1zM143 166h1v1h-1zM434 166h1v1h-1zM437 166h1v1h-1zM440 166h1v1h-1zM624 166h1v1h-1zM626 166h1v1h-1zM628 166h1v1h-1zM142 167h3v1h-3zM433 167h2v1h-2zM436 167h3v1h-3zM440 167h2v1h-2zM625 167h1v7h-1zM627 167h1v7h-1zM629 167h1v7h-1zM143 168h1v1h-1zM434 168h1v1h-1zM437 168h1v2h-1zM440 168h1v1h-1zM435 169h1v1h-1zM439 169h1v1h-1zM436 170h3v1h-3zM437 171h1v1h-1zM435 172h5v1h-5zM632 172h1v2h-1zM80 173h1v1h-1zM83 173h1v1h-1zM86 173h1v1h-1zM437 173h1v2h-1zM79 174h2v1h-2zM82 174h3v1h-3zM86 174h2v1h-2zM630 174h2v1h-2zM80 175h1v1h-1zM83 175h1v2h-1zM86 175h1v1h-1zM81 176h1v1h-1zM85 176h1v1h-1zM82 177h3v1h-3zM83 178h1v1h-1zM81 179h5v1h-5zM83 180h1v2h-1zM624 206h1v1h-1zM632 206h1v1h-1zM625 207h1v1h-1zM631 207h1v1h-1zM626 208h1v2h-1zM630 208h1v2h-1zM624 210h9v1h-9zM626 211h1v2h-1zM630 211h1v2h-1zM625 213h1v1h-1zM631 213h1v1h-1zM624 214h1v1h-1zM632 214h1v1h-1zM627 247h3v1h-3zM625 248h2v1h-2zM630 248h2v1h-2zM624 249h1v1h-1zM629 249h1v2h-1zM632 249h1v2h-1zM625 250h2v1h-2zM624 251h1v2h-1zM627 251h1v2h-1zM630 251h2v1h-2zM632 252h1v1h-1zM625 253h2v1h-2zM630 253h2v1h-2zM627 254h3v1h-3zM373 264h1v5h-1zM378 264h3v1h-3zM385 264h1v5h-1zM377 265h1v3h-1zM381 265h1v3h-1zM355 266h1v1h-1zM354 267h3v1h-3zM355 268h1v1h-1zM378 268h3v1h-3zM374 269h1v2h-1zM384 269h1v2h-1zM375 271h2v1h-2zM382 271h2v1h-2zM377 272h5v1h-5zM379 273h1v3h-1zM375 276h9v1h-9zM626 276h3v1h-3zM379 277h1v4h-1zM625 277h1v1h-1zM629 277h2v1h-2zM626 278h1v1h-1zM630 278h1v1h-1zM627 279h1v3h-1zM631 279h1v3h-1zM626 282h1v1h-1zM630 282h1v1h-1zM625 283h1v1h-1zM629 283h2v1h-2zM626 284h3v1h-3zM625 346h1v1h-1zM628 346h1v1h-1zM631 346h1v1h-1zM624 347h2v1h-2zM627 347h3v1h-3zM631 347h2v1h-2zM625 348h1v1h-1zM628 348h1v2h-1zM631 348h1v1h-1zM626 349h1v1h-1zM630 349h1v1h-1zM627 350h3v1h-3zM628 351h1v1h-1zM626 352h5v1h-5zM628 353h1v2h-1zM625 356h1v3h-1zM628 356h1v1h-1zM631 356h1v3h-1zM627 357h1v1h-1zM629 357h1v1h-1zM628 358h1v1h-1zM626 359h1v1h-1zM630 359h1v1h-1zM627 360h3v1h-3zM628 361h1v1h-1zM626 362h5v1h-5zM628 363h1v2h-1zM240 403h3v1h-3zM239 404h1v1h-1zM243 404h2v1h-2zM240 405h1v1h-1zM244 405h1v1h-1zM241 406h1v3h-1zM245 406h1v3h-1zM240 409h1v1h-1zM244 409h1v1h-1zM239 410h1v1h-1zM243 410h2v1h-2zM240 411h3v1h-3zM198 441h1v3h-1zM201 441h1v1h-1zM204 441h1v3h-1zM220 441h1v1h-1zM224 441h1v1h-1zM228 441h1v1h-1zM200 442h1v1h-1zM202 442h1v1h-1zM221 442h1v1h-1zM223 442h1v1h-1zM225 442h1v1h-1zM227 442h1v1h-1zM229 442h1v1h-1zM201 443h1v1h-1zM222 443h1v13h-1zM226 443h1v13h-1zM230 443h1v13h-1zM199 444h1v1h-1zM203 444h1v1h-1zM200 445h3v1h-3zM201 446h1v1h-1zM199 447h5v1h-5zM201 448h1v2h-1zM235 452h1v1h-1zM234 453h3v1h-3zM235 454h1v2h-1zM231 456h1v1h-1zM234 456h1v1h-1zM232 457h2v1h-2z"/>
<path fill="#00ffff" d="M222 127h2v1h-2zM226 128h1v2h-1zM229 129h1v1h-1zM230 130h1v1h-1zM232 130h1v1h-1zM235 131h1v1h-1zM234 132h1v1h-1zM238 132h1v1h-1zM241 133h1v1h-1zM238 134h1v1h-1zM244 134h1v1h-1zM242 135h1v1h-1zM247 135h1v1h-1zM250 136h1v1h-1zM246 137h1v1h-1zM253 137h1v1h-1zM256 138h1v1h-1zM250 139h1v1h-1zM259 139h1v1h-1zM254 140h1v1h-1zM262 140h1v1h-1zM265 141h1v1h-1zM258 142h1v1h-1zM268 142h1v1h-1zM271 143h1v1h-1zM262 144h1v1h-1zM274 144h1v1h-1zM266 145h1v1h-1zM277 145h1v1h-1zM280 146h1v1h-1zM270 147h1v1h-1zM283 147h1v1h-1zM286 148h1v1h-1zM274 149h1v1h-1zM289 149h1v1h-1zM278 150h1v1h-1zM292 150h1v1h-1zM295 151h1v1h-1zM282 152h1v1h-1zM298 152h1v2h-1zM301 153h1v2h-1zM286 154h1v1h-1zM304 154h1v2h-1zM290 155h1v1h-1zM307 155h1v2h-1zM310 156h1v2h-1zM294 157h1v1h-1zM313 157h1v2h-1zM316 158h1v2h-1zM298 159h1v1h-1zM319 159h1v2h-1zM322 160h1v2h-1zM302 161h1v1h-1zM306 162h1v1h-1zM323 162h1v1h-1zM310 164h1v1h-1zM323 164h2v1h-2zM314 166h1v1h-1zM324 166h1v1h-1zM318 167h1v1h-1zM325 167h1v1h-1zM324 168h1v1h-1zM322 169h1v1h-1zM325 170h1v1h-1zM326 171h1v1h-1zM325 172h1v1h-1zM330 172h1v1h-1zM326 173h1v2h-1zM326 176h2v1h-2zM327 178h1v1h-1zM328 179h1v1h-1zM327 180h1v1h-1zM328 182h2v1h-2zM329 184h1v3h-1zM330 188h1v1h-1zM330 190h1v1h-1zM331 191h1v2h-1zM331 194h2v1h-2zM332 196h1v1h-1zM332 198h1v1h-1zM333 200h1v1h-1zM333 202h1v1h-1zM334 203h1v2h-1zM335 206h1v1h-1zM335 208h1v1h-1zM336 210h1v1h-1zM336 212h2v1h-2zM337 214h1v3h-1zM338 218h1v1h-1zM338 220h1v1h-1zM339 221h1v2h-1zM340 224h1v1h-1zM340 226h1v1h-1zM341 227h1v2h-1zM341 230h1v1h-1zM342 232h1v3h-1zM343 236h1v1h-1zM343 238h1v1h-1zM344 239h1v2h-1zM344 242h2v1h-2zM345 244h1v2h-1zM346 246h1v1h-1zM346 248h1v1h-1zM347 250h1v3h-1zM348 254h1v1h-1zM348 256h1v1h-1zM349 257h1v2h-1zM349 260h1v1h-1zM350 262h1v3h-1zM351 266h1v1h-1z"/>
<g shape-rendering="auto" text-rendering="geometricPrecision" style="will-change:transform">
<g font-family="'Liberation Sans', sans-serif" font-size="12.7" text-anchor="middle">
<text transform="translate(74.5,276) scale(0.8,1)" x="0" fill="#ff0000"><tspan font-family="'Liberation Mono', monospace" font-size="13.2">1</tspan></text>
<text transform="translate(103.5,343) scale(0.8,1)" x="0" fill="#ffff00">2</text>
<text transform="translate(171.5,397) scale(0.8,1)" x="0" fill="#00ff00">3</text>
<text transform="translate(267.5,409) scale(0.8,1)" x="0" fill="#0000ff">4</text>
<text transform="translate(356.5,364) scale(0.8,1)" x="0" fill="#ff0000">5</text>
<text transform="translate(401.5,286) scale(0.8,1)" x="0" fill="#ffff00">6</text>
<text transform="translate(404.5,212) scale(0.8,1)" x="0" fill="#00ff00">7</text>
<text transform="translate(375.5,145) scale(0.8,1)" x="0" fill="#0000ff">8</text>
<text transform="translate(307.5,91) scale(0.8,1)" x="0" fill="#ff0000">9</text>
<text transform="translate(211.5,79) scale(0.8,1)" x="-5 5" fill="#ffff00"><tspan font-family="'Liberation Mono', monospace" font-size="13.2">1</tspan>0</text>
<text transform="translate(122.5,124) scale(0.8,1)" x="-5 5" fill="#00ff00"><tspan font-family="'Liberation Mono', monospace" font-size="13.2">1</tspan><tspan font-family="'Liberation Mono', monospace" font-size="13.2">1</tspan></text>
<text transform="translate(77.5,202) scale(0.8,1)" x="-5 5" fill="#0000ff"><tspan font-family="'Liberation Mono', monospace" font-size="13.2">1</tspan>2</text>
</g>
<g font-family="'Liberation Mono', monospace" font-size="10.60" letter-spacing="-0.3610">
<text y="14"><tspan x="485.4" fill="#ffffff">Astrolog 5.41G</tspan></text>
<text y="24"><tspan x="485.4" fill="#c0c0c0">Chart of the Moment</tspan></text>
<text y="34"><tspan x="485.4" fill="#ffffff">Thu February 26, 2026</tspan></text>
<text y="44"> <tspan x="491.4" fill="#ffffff">4:15:00pm (ST -8:00 GMT)</tspan></text>
<text y="54"><tspan x="485.4" fill="#c0c0c0">San Francisco, CA</tspan></text>
<text y="64"><tspan x="485.4" fill="#c0c0c0">122°41'00"W 37°79'00"N</tspan></text>
<text y="74"><tspan x="485.4" fill="#c0c0c0">Placidus houses.</tspan></text>
<text y="84"><tspan x="485.4" fill="#c0c0c0">Tropical, Geocentric.</tspan></text>
<text y="94"><tspan x="485.4" fill="#ffffff">Julian Day = 2461098.5104</tspan></text>
<text y="104"><tspan x="485.4" fill="#c0c0c0">Obliquity = 23°26'09"</tspan></text>
<text y="114"><tspan x="485.4" fill="#c0c0c0">Sidereal time:</tspan>  <tspan x="581.4" fill="#c0c0c0">2:31:41</tspan></text>
<text y="124"><tspan x="485.4" fill="#c0c0c0">DeltaT =</tspan>  <tspan x="545.4" fill="#c0c0c0">95.4071</tspan></text>
<text y="144"> <tspan x="491.4" fill="#ff0000">1st house: 18Leo04</tspan></text>
<text y="154"> <tspan x="491.4" fill="#ffff00">2nd house: 10Vir28</tspan></text>
<text y="164"> <tspan x="491.4" fill="#00ff00">3rd house:</tspan>  <tspan x="563.4" fill="#00ff00">7Lib45</tspan></text>
<text y="174"> <tspan x="491.4" fill="#0000ff">4th house: 10Sco20</tspan></text>
<text y="184"> <tspan x="491.4" fill="#ff0000">5th house: 15Sag35</tspan></text>
<text y="194"> <tspan x="491.4" fill="#ffff00">6th house: 18Cap51</tspan></text>
<text y="204"> <tspan x="491.4" fill="#00ff00">7th house: 18Aqu04</tspan></text>
<text y="214"> <tspan x="491.4" fill="#0000ff">8th house: 10Pis28</tspan></text>
<text y="224"> <tspan x="491.4" fill="#ff0000">9th house:</tspan>  <tspan x="563.4" fill="#ff0000">7Ari45</tspan></text>
<text y="234"><tspan x="485.4" fill="#ffff00">10th house: 10Tau20</tspan></text>
<text y="244"><tspan x="485.4" fill="#00ff00">11th house: 15Gem35</tspan></text>
<text y="254"><tspan x="485.4" fill="#0000ff">12th house: 18Can51</tspan></text>
<text y="274"> <tspan x="491.4" fill="#ff0000">Sun:</tspan>  <tspan x="527.4" fill="#0000ff">8Pis24</tspan> <tspan x="575.4" fill="#c0c0c0">+ 0°00'</tspan></text>
<text y="284"><tspan x="485.4" fill="#0000ff">Moon:</tspan> <tspan x="521.4" fill="#0000ff">11Can15</tspan> <tspan x="575.4" fill="#c0c0c0">+ 4°28'</tspan></text>
<text y="294"><tspan x="485.4" fill="#00ff00">Merc:</tspan> <tspan x="521.4" fill="#0000ff">22Pis31</tspan><tspan x="563.4" fill="#ffffff">R</tspan> <tspan x="575.4" fill="#c0c0c0">+ 2°56'</tspan></text>
<text y="304"><tspan x="485.4" fill="#ffff00">Venu:</tspan> <tspan x="521.4" fill="#0000ff">20Pis44</tspan> <tspan x="575.4" fill="#c0c0c0">- 1°23'</tspan></text>
<text y="314"><tspan x="485.4" fill="#ff0000">Mars:</tspan> <tspan x="521.4" fill="#00ff00">27Aqu11</tspan> <tspan x="575.4" fill="#c0c0c0">- 1°06'</tspan></text>
<text y="324"><tspan x="485.4" fill="#ff0000">Jupi:</tspan> <tspan x="521.4" fill="#0000ff">15Can20</tspan><tspan x="563.4" fill="#ffffff">R</tspan> <tspan x="575.4" fill="#c0c0c0">+ 0°21'</tspan></text>
<text y="334"><tspan x="485.4" fill="#ffff00">Satu:</tspan>  <tspan x="527.4" fill="#ff0000">1Ari29</tspan> <tspan x="575.4" fill="#c0c0c0">- 2°08'</tspan></text>
<text y="344"><tspan x="485.4" fill="#00ff00">Uran:</tspan> <tspan x="521.4" fill="#ffff00">27Tau41</tspan> <tspan x="575.4" fill="#c0c0c0">- 0°11'</tspan></text>
<text y="354"><tspan x="485.4" fill="#0000ff">Nept:</tspan>  <tspan x="527.4" fill="#ff0000">0Ari58</tspan> <tspan x="575.4" fill="#c0c0c0">- 1°18'</tspan></text>
<text y="364"><tspan x="485.4" fill="#0000ff">Plut:</tspan>  <tspan x="527.4" fill="#00ff00">4Aqu29</tspan> <tspan x="575.4" fill="#c0c0c0">- 3°51'</tspan></text>
<text y="384"><tspan x="485.4" fill="#c0c0c0">Fire: 2, Earth: 1,</tspan></text>
<text y="394"><tspan x="485.4" fill="#c0c0c0">Air : 2, Water: 5</tspan></text>
<text y="404"><tspan x="485.4" fill="#c0c0c0">Car: 4, Fix: 3, Mut: 3</tspan></text>
<text y="414"><tspan x="485.4" fill="#c0c0c0">Yang: 4, Yin: 6</tspan></text>
<text y="424"><tspan x="485.4" fill="#c0c0c0">M: 9, N: 1, A: 3, D: 7</tspan></text>
<text y="434"><tspan x="485.4" fill="#c0c0c0">Ang: 3, Suc: 6, Cad: 1</tspan></text>
<text y="444"><tspan x="485.4" fill="#c0c0c0">Learn: 5, Share: 5</tspan></text>
</g>
</g>
</svg>
</body></html>
